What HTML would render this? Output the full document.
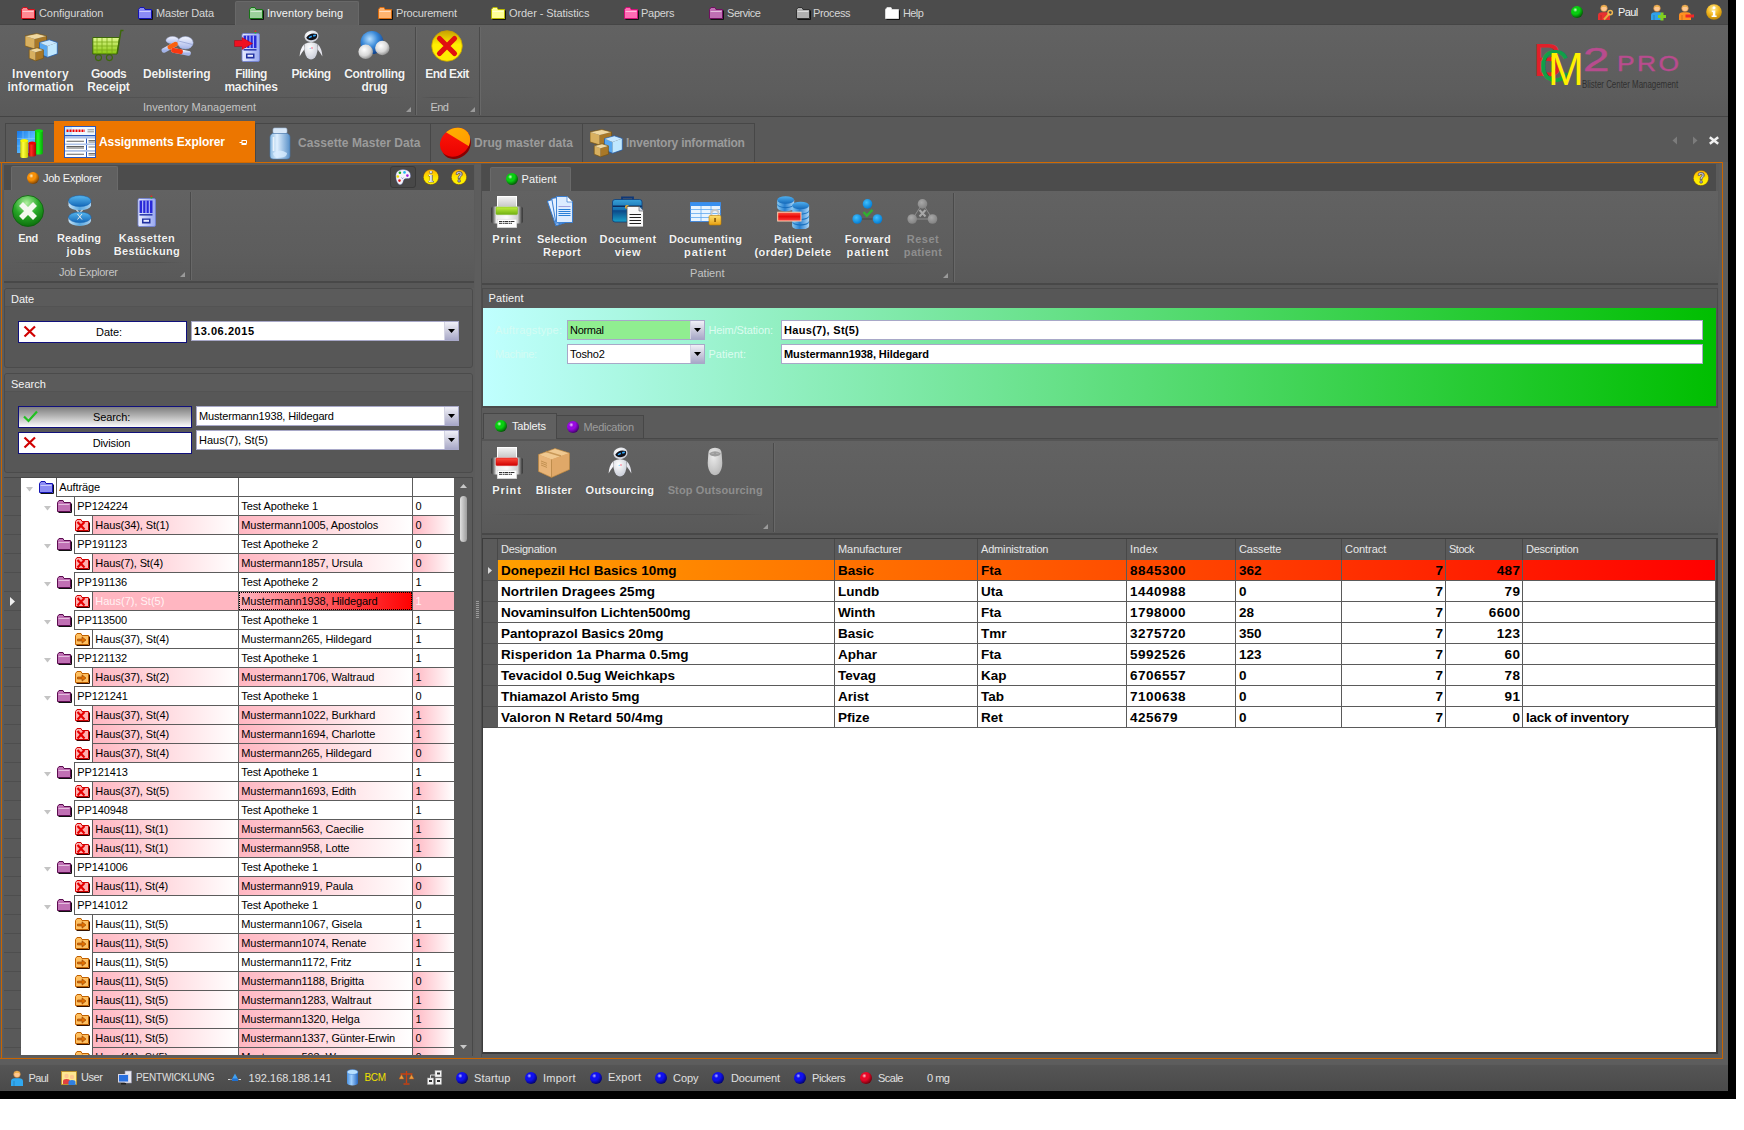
<!DOCTYPE html>
<html lang="en"><head><meta charset="utf-8"><title>BCM2 PRO - Assignments Explorer</title>
<style>
html,body{margin:0;padding:0;background:#fff;}
body{width:1744px;height:1130px;overflow:hidden;position:relative;font-family:"Liberation Sans",sans-serif;}
#app{position:absolute;left:0;top:0;width:1728px;height:1091px;background:#5d5d5d;overflow:hidden;}
#app div,#app span,#app svg{position:absolute;box-sizing:border-box;}
.t{white-space:nowrap;font-size:11px;line-height:14px;color:#ececec;}
.m{color:#d6d6d6;}
.ma{color:#f4f4f4;}
.rb{font-weight:bold;color:#f2f2f2;text-align:center;text-shadow:0 0 1px rgba(0,0,0,.35);}
.rbt{font-weight:bold;font-size:12px;color:#f2f2f2;text-align:center;text-shadow:0 0 1px rgba(0,0,0,.35);}
.rbd{font-weight:bold;color:#8e8e8e;text-align:center;}
.gl{color:#c4c4c4;}
.dt{font-weight:bold;font-size:12px;line-height:14px;color:#9b9b9b;}
.dta{font-weight:bold;font-size:12px;line-height:14px;color:#fff;}
.k{color:#000;letter-spacing:-0.1px;}
.kb{color:#000;font-weight:bold;}
.g{color:#000;font-weight:bold;font-size:13.5px;line-height:16px;}
.gh{color:#e8e8e8;}
.st{color:#e0e0e0;}
.sy{color:#f0e000;}
.ts{color:#fff2f4;}
.pl{color:#d4fcf4;}
.pl2{color:#dcfcf0;}
.gl2{color:#9c9c9c;}
</style></head>
<body>
<div style="position:absolute;left:1728px;top:0;width:8px;height:1099px;background:#000"></div>
<div style="position:absolute;left:0;top:1091px;width:1736px;height:8px;background:#000"></div>
<div id="app">
<!-- menu bar -->
<div style="left:0px;top:0px;width:1728px;height:25px;background:#4c4c4c;border-bottom:1px solid #454545"></div><div style="left:235px;top:1px;width:124px;height:25px;background:#5f5f5f;border:1px solid #686868;border-bottom:none;border-radius:2px 2px 0 0"></div><svg style="left:21px;top:7px" width="15" height="13" viewBox="0 0 15 13"><path d="M0.5 2.5 L2 0.5 H6 L7 2.5 H13.5 V11.5 H0.5 Z" fill="#ff8a94" stroke="#d0101c" stroke-width="1"/><path d="M1.5 4.5 H12.5" stroke="#fff" stroke-opacity=".55" stroke-width="1"/><path d="M1.5 12.5 H14.5 V3.5" stroke="#111" stroke-width="1" fill="none"/></svg><span class="t m" style="left:39px;top:6px;letter-spacing:-0.08px;">Configuration</span>
<svg style="left:138px;top:7px" width="15" height="13" viewBox="0 0 15 13"><path d="M0.5 2.5 L2 0.5 H6 L7 2.5 H13.5 V11.5 H0.5 Z" fill="#8c8cf4" stroke="#1414b4" stroke-width="1"/><path d="M1.5 4.5 H12.5" stroke="#fff" stroke-opacity=".55" stroke-width="1"/><path d="M1.5 12.5 H14.5 V3.5" stroke="#111" stroke-width="1" fill="none"/></svg><span class="t m" style="left:156px;top:6px;letter-spacing:-0.19px;">Master Data</span>
<svg style="left:249px;top:7px" width="15" height="13" viewBox="0 0 15 13"><path d="M0.5 2.5 L2 0.5 H6 L7 2.5 H13.5 V11.5 H0.5 Z" fill="#9cd09c" stroke="#187418" stroke-width="1"/><path d="M1.5 4.5 H12.5" stroke="#fff" stroke-opacity=".55" stroke-width="1"/><path d="M1.5 12.5 H14.5 V3.5" stroke="#111" stroke-width="1" fill="none"/></svg><span class="t ma" style="left:267px;top:6px;letter-spacing:0.06px;">Inventory being</span>
<svg style="left:378px;top:7px" width="15" height="13" viewBox="0 0 15 13"><path d="M0.5 2.5 L2 0.5 H6 L7 2.5 H13.5 V11.5 H0.5 Z" fill="#ffb470" stroke="#d86c10" stroke-width="1"/><path d="M1.5 4.5 H12.5" stroke="#fff" stroke-opacity=".55" stroke-width="1"/><path d="M1.5 12.5 H14.5 V3.5" stroke="#111" stroke-width="1" fill="none"/></svg><span class="t m" style="left:396px;top:6px;letter-spacing:-0.20px;">Procurement</span>
<svg style="left:491px;top:7px" width="15" height="13" viewBox="0 0 15 13"><path d="M0.5 2.5 L2 0.5 H6 L7 2.5 H13.5 V11.5 H0.5 Z" fill="#ffff98" stroke="#b8b800" stroke-width="1"/><path d="M1.5 4.5 H12.5" stroke="#fff" stroke-opacity=".55" stroke-width="1"/><path d="M1.5 12.5 H14.5 V3.5" stroke="#111" stroke-width="1" fill="none"/></svg><span class="t m" style="left:509px;top:6px;letter-spacing:-0.08px;">Order - Statistics</span>
<svg style="left:624px;top:7px" width="15" height="13" viewBox="0 0 15 13"><path d="M0.5 2.5 L2 0.5 H6 L7 2.5 H13.5 V11.5 H0.5 Z" fill="#ff6cb4" stroke="#d01078" stroke-width="1"/><path d="M1.5 4.5 H12.5" stroke="#fff" stroke-opacity=".55" stroke-width="1"/><path d="M1.5 12.5 H14.5 V3.5" stroke="#111" stroke-width="1" fill="none"/></svg><span class="t m" style="left:641px;top:6px;letter-spacing:-0.27px;">Papers</span>
<svg style="left:709px;top:7px" width="15" height="13" viewBox="0 0 15 13"><path d="M0.5 2.5 L2 0.5 H6 L7 2.5 H13.5 V11.5 H0.5 Z" fill="#c070b4" stroke="#701060" stroke-width="1"/><path d="M1.5 4.5 H12.5" stroke="#fff" stroke-opacity=".55" stroke-width="1"/><path d="M1.5 12.5 H14.5 V3.5" stroke="#111" stroke-width="1" fill="none"/></svg><span class="t m" style="left:727px;top:6px;letter-spacing:-0.45px;">Service</span>
<svg style="left:796px;top:7px" width="15" height="13" viewBox="0 0 15 13"><path d="M0.5 2.5 L2 0.5 H6 L7 2.5 H13.5 V11.5 H0.5 Z" fill="#b0b0b0" stroke="#303030" stroke-width="1"/><path d="M1.5 4.5 H12.5" stroke="#fff" stroke-opacity=".55" stroke-width="1"/><path d="M1.5 12.5 H14.5 V3.5" stroke="#111" stroke-width="1" fill="none"/></svg><span class="t m" style="left:813px;top:6px;letter-spacing:-0.37px;">Process</span>
<svg style="left:885px;top:7px" width="15" height="13" viewBox="0 0 15 13"><path d="M0.5 2.5 L2 0.5 H6 L7 2.5 H13.5 V11.5 H0.5 Z" fill="#ffffff" stroke="#d8d8d8" stroke-width="1"/><path d="M1.5 4.5 H12.5" stroke="#fff" stroke-opacity=".55" stroke-width="1"/><path d="M1.5 12.5 H14.5 V3.5" stroke="#111" stroke-width="1" fill="none"/></svg><span class="t m" style="left:903px;top:6px;letter-spacing:-0.60px;">Help</span>
<div style="left:1571px;top:6px;width:12px;height:12px;border-radius:50%;background:radial-gradient(circle 9.4px at 36% 32%,#c8ffc8 0%,#08d010 24%,#08d010 46%,#023c04 100%)"></div><svg style="left:1597px;top:4px" width="17" height="17" viewBox="0 0 17 17"><defs><linearGradient id="g1" x1="0" y1="0" x2="0" y2="1"><stop offset="0" stop-color="#e83030"/><stop offset="1" stop-color="#e83030"/></linearGradient></defs><circle cx="7" cy="4.3" r="3.3" fill="#ffc890" stroke="#c88030" stroke-width=".6"/><path d="M3.7 3.6 Q7 -0.8 10.3 3.6 Q7 2 3.7 3.6Z" fill="#e8b040"/><path d="M1 16 V11.5 Q1 8.2 5 8.2 H9 Q13 8.2 13 11.5 V16Z" fill="url(#g1)"/><path d="M4 11 V16" stroke="#000" stroke-opacity=".25" stroke-width=".8"/><path d="M7 15.5 L12.5 9.5" stroke="#e8a840" stroke-width="2"/><circle cx="13.2" cy="8.6" r="2.2" fill="none" stroke="#f0b850" stroke-width="1.5"/></svg><span class="t ma" style="left:1618px;top:5px;letter-spacing:-0.60px;">Paul</span><svg style="left:1650px;top:4px" width="17" height="17" viewBox="0 0 17 17"><defs><linearGradient id="g2" x1="0" y1="0" x2="0" y2="1"><stop offset="0" stop-color="#30a0e8"/><stop offset="1" stop-color="#30a0e8"/></linearGradient></defs><circle cx="7" cy="4.3" r="3.3" fill="#ffc890" stroke="#c88030" stroke-width=".6"/><path d="M3.7 3.6 Q7 -0.8 10.3 3.6 Q7 2 3.7 3.6Z" fill="#e8b040"/><path d="M1 16 V11.5 Q1 8.2 5 8.2 H9 Q13 8.2 13 11.5 V16Z" fill="url(#g2)"/><path d="M4 11 V16" stroke="#000" stroke-opacity=".25" stroke-width=".8"/><path d="M8 12.5 H16 M12 8.5 V16.5" stroke="#80d020" stroke-width="3"/></svg><svg style="left:1678px;top:4px" width="17" height="17" viewBox="0 0 17 17"><defs><linearGradient id="g3" x1="0" y1="0" x2="0" y2="1"><stop offset="0" stop-color="#ff9020"/><stop offset="1" stop-color="#ff9020"/></linearGradient></defs><circle cx="7" cy="4.3" r="3.3" fill="#ffc890" stroke="#c88030" stroke-width=".6"/><path d="M3.7 3.6 Q7 -0.8 10.3 3.6 Q7 2 3.7 3.6Z" fill="#e8b040"/><path d="M1 16 V11.5 Q1 8.2 5 8.2 H9 Q13 8.2 13 11.5 V16Z" fill="url(#g3)"/><path d="M4 11 V16" stroke="#000" stroke-opacity=".25" stroke-width=".8"/><rect x="7.5" y="10.5" width="8.5" height="3" fill="#f02828"/></svg><svg style="left:1706px;top:4px" width="16" height="16" viewBox="0 0 16 16"><defs><radialGradient id="g4" cx="0.45" cy="0.3" r="0.75"><stop offset="0" stop-color="#fff0a0"/><stop offset="0.5" stop-color="#f4b820"/><stop offset="1" stop-color="#b88000"/></radialGradient></defs><circle cx="8" cy="8" r="7.8" fill="url(#g4)"/><circle cx="8" cy="3.8" r="1.5" fill="#fff"/><path d="M5.8 6.5 H9.3 V11.5 H10.6 V13 H5.6 V11.5 H6.9 V8 H5.8Z" fill="#fff"/></svg>
<!-- ribbon -->
<div style="left:0px;top:25px;width:1728px;height:91px;background:linear-gradient(#626262,#5d5d5d 70%,#595959)"></div><div style="left:0px;top:116px;width:1728px;height:1px;background:#444"></div><div style="left:0px;top:117px;width:1728px;height:46px;background:#595959"></div><div style="left:415px;top:27px;width:1px;height:88px;background:#4a4a4a"></div><div style="left:416px;top:27px;width:1px;height:88px;background:#686868"></div><div style="left:479px;top:27px;width:1px;height:88px;background:#4a4a4a"></div><div style="left:480px;top:27px;width:1px;height:88px;background:#686868"></div><div style="left:8px;top:97px;width:400px;height:1px;background:linear-gradient(90deg,rgba(80,80,80,0),#525252 15%,#525252 85%,rgba(80,80,80,0))"></div><div style="left:420px;top:97px;width:56px;height:1px;background:linear-gradient(90deg,rgba(80,80,80,0),#525252 20%,#525252 80%,rgba(80,80,80,0))"></div><svg style="left:406px;top:107px" width="5" height="5" viewBox="0 0 5 5"><path d="M5 0 V5 H0 Z" fill="#9a9a9a"/></svg><svg style="left:470px;top:107px" width="5" height="5" viewBox="0 0 5 5"><path d="M5 0 V5 H0 Z" fill="#9a9a9a"/></svg><span class="t gl" style="left:143px;top:100px;letter-spacing:0.03px;">Inventory Management</span><span class="t gl" style="left:430.5px;top:100px;letter-spacing:-0.60px;">End</span>
<svg style="left:25px;top:31px" width="33" height="31" viewBox="0 0 33 31"><path d="M0 4.8870000000000005 L9.675 7.925000000000001 V18.0 L0 14.962 Z" fill="#d8b060"/><path d="M9.675 7.925000000000001 L21.5 4.8870000000000005 V14.962 L9.675 18.0 Z" fill="#a87828"/><path d="M0 4.8870000000000005 L11.825000000000001 2.5 L21.5 4.8870000000000005 L9.675 7.925000000000001 Z" fill="#f0d8a0"/><path d="M0 4.8870000000000005 L11.825000000000001 2.5 L21.5 4.8870000000000005 V14.962 L9.675 18.0 L0 14.962 Z" fill="none" stroke="#7a5410" stroke-width=".7"/><path d="M14.5 11.495000000000001 L22.509999999999998 14.925 V26.3 L14.5 22.87 Z" fill="#58a8f0"/><path d="M22.509999999999998 14.925 L32.3 11.495000000000001 V22.87 L22.509999999999998 26.3 Z" fill="#c0e8ff"/><path d="M14.5 11.495000000000001 L24.29 8.8 L32.3 11.495000000000001 L22.509999999999998 14.925 Z" fill="#c8e8ff"/><path d="M14.5 11.495000000000001 L24.29 8.8 L32.3 11.495000000000001 V22.87 L22.509999999999998 26.3 L14.5 22.87 Z" fill="none" stroke="#1c5cb0" stroke-width=".7"/><path d="M4.2 18.802 L10.59 21.35 V29.8 L4.2 27.252000000000002 Z" fill="#d8b060"/><path d="M10.59 21.35 L18.4 18.802 V27.252000000000002 L10.59 29.8 Z" fill="#a87828"/><path d="M4.2 18.802 L12.010000000000002 16.8 L18.4 18.802 L10.59 21.35 Z" fill="#f0d8a0"/><path d="M4.2 18.802 L12.010000000000002 16.8 L18.4 18.802 V27.252000000000002 L10.59 29.8 L4.2 27.252000000000002 Z" fill="none" stroke="#7a5410" stroke-width=".7"/></svg><span class="t rbt" style="left:-19.5px;top:66.5px;width:120px;text-align:center;letter-spacing:0.31px;">Inventory</span><span class="t rbt" style="left:-19.5px;top:79.5px;width:120px;text-align:center;letter-spacing:0.00px;">information</span>
<svg style="left:92px;top:29px" width="33" height="33" viewBox="0 0 33 33"><defs><linearGradient id="g5" x1="0" y1="0" x2="0" y2="1"><stop offset="0" stop-color="#e0f890"/><stop offset="1" stop-color="#88c810"/></linearGradient></defs><path d="M0.8 8.5 H27.5 L25 25 H0.8 Z" fill="url(#g5)" stroke="#3c6808" stroke-width="1"/><path d="M5 9 V24.5 M10 9 V24.5 M15 9 V24.5 M20 9 V24.5 M1 13 H26.5 M1 17 H26 M1 21 H25.5" stroke="#78a818" stroke-width=".8" fill="none"/><path d="M25.2 24.5 L29 1.5 H31.5" stroke="#3c6808" stroke-width="1.4" fill="none"/><circle cx="6.5" cy="28.6" r="3" fill="none" stroke="#3c6808" stroke-width="1.1"/><circle cx="17.4" cy="28.6" r="3" fill="none" stroke="#3c6808" stroke-width="1.1"/></svg><span class="t rbt" style="left:48.5px;top:66.5px;width:120px;text-align:center;letter-spacing:-0.60px;">Goods</span><span class="t rbt" style="left:48.5px;top:79.5px;width:120px;text-align:center;letter-spacing:-0.14px;">Receipt</span>
<svg style="left:160px;top:32px" width="34" height="26" viewBox="0 0 34 26"><defs><linearGradient id="g6" x1="0" y1="0" x2="0" y2="1"><stop offset="0" stop-color="#f4f6ff"/><stop offset="1" stop-color="#a4b4e8"/></linearGradient></defs><ellipse cx="12.500" cy="8.200" rx="6.500" ry="3.600" fill="url(#g6)" stroke="#a8b4e0" stroke-width=".4"/><ellipse cx="25.400" cy="10.800" rx="7.800" ry="6.300" fill="url(#g6)" stroke="#98a8d8" stroke-width=".5"/><path d="M18.500 9 L32.500 12.500" stroke="#8c9cd0" stroke-width=".7"/><path d="M4 18.300 L15.500 12.200" stroke="url(#g6)" stroke-width="4.800" stroke-linecap="round"/><path d="M10 15.100 L15.500 12.200" stroke="#f86010" stroke-width="4.800" stroke-linecap="round"/><path d="M13.500 18.300 L28.500 21.300" stroke="url(#g6)" stroke-width="4.800" stroke-linecap="round"/><path d="M13.500 18.300 L20.500 19.700" stroke="#f83810" stroke-width="4.800" stroke-linecap="round"/></svg><span class="t rbt" style="left:116.69999999999999px;top:66.5px;width:120px;text-align:center;letter-spacing:-0.17px;">Deblistering</span>
<svg style="left:234px;top:30px" width="33" height="33" viewBox="0 0 33 33"><defs><linearGradient id="g7" x1="0" y1="0" x2="1" y2="0"><stop offset="0" stop-color="#e8ecff"/><stop offset="1" stop-color="#98a8f0"/></linearGradient></defs><rect x="8" y="3.5" width="17.5" height="28" rx="1.5" fill="url(#g7)" stroke="#7080d8" stroke-width=".8"/><rect x="9.5" y="5.5" width="13" height="12.5" fill="#2828d8"/><path d="M12.7 5.5 V18 M16 5.5 V18 M19.3 5.5 V18" stroke="#c8d0ff" stroke-width="1"/><rect x="9.5" y="19" width="13" height="1.6" fill="#3040b0"/><rect x="12" y="23.5" width="8.5" height="5" fill="#2030a0"/><rect x="13.5" y="24.8" width="5.5" height="2" fill="#e8ecff"/><rect x="20.6" y="0.5" width="1.6" height="1.6" fill="#f02020"/><rect x="20.6" y="2.1" width="1.6" height="1.4" fill="#20c020"/><path d="M0.5 10.5 H8 V7.5 L18.5 13.5 L8 19.5 V16.5 H0.5 Z" fill="#f01020" stroke="#a80010" stroke-width=".5"/></svg><span class="t rbt" style="left:191px;top:66.5px;width:120px;text-align:center;letter-spacing:-0.55px;">Filling</span><span class="t rbt" style="left:191px;top:79.5px;width:120px;text-align:center;letter-spacing:-0.27px;">machines</span>
<svg style="left:295px;top:30px" width="32" height="32" viewBox="0 0 32 32"><defs><radialGradient id="g8" cx="0.4" cy="0.3" r="0.8"><stop offset="0" stop-color="#ffffff"/><stop offset="1" stop-color="#c4c8d4"/></radialGradient></defs><ellipse cx="16.500" cy="6.300" rx="7" ry="5.800" transform="rotate(-12 16.500 6.300)" fill="url(#g8)"/><path d="M11.300 7.500 Q15.500 1.800 22 4.300 Q23.200 8.800 17.800 10 Q12.800 10.800 11.300 7.500Z" fill="#101018"/><path d="M13.600 7.200 l2.800 -1.800 l0.700 1.500 l-2.800 1.300z M18 5 l2.600 -.6 l.4 1.500 l-2.600 .9z" fill="#30a8ff"/><path d="M9.500 14 Q16 10.500 22.500 14 Q23.500 22 20 27.500 Q16 31.500 12 27.500 Q8.500 22 9.500 14Z" fill="url(#g8)"/><path d="M8.800 14.500 Q5 19 4.600 26.500 Q7.200 22 9.300 19.500Z" fill="#f4f4f8"/><path d="M23.200 14.500 Q27 19 27.400 26.500 Q24.800 22 22.700 19.500Z" fill="#e4e4ec"/><circle cx="17" cy="18" r=".8" fill="#ff6080"/><circle cx="15.200" cy="18.300" r=".6" fill="#60c8ff"/></svg><span class="t rbt" style="left:251px;top:66.5px;width:120px;text-align:center;letter-spacing:-0.50px;">Picking</span>
<svg style="left:358px;top:31px" width="33" height="29" viewBox="0 0 33 29"><defs><radialGradient id="g9" cx="0.4" cy="0.35" r="0.7"><stop offset="0" stop-color="#b8e0ff"/><stop offset="0.5" stop-color="#3888d8"/><stop offset="1" stop-color="#0c3c88"/></radialGradient><radialGradient id="g10" cx="0.4" cy="0.35" r="0.7"><stop offset="0" stop-color="#ffffff"/><stop offset="0.6" stop-color="#d8d8d8"/><stop offset="1" stop-color="#888888"/></radialGradient></defs><circle cx="14" cy="11.5" r="11.5" fill="url(#g9)"/><circle cx="7.7" cy="20.8" r="7.3" fill="url(#g10)"/><circle cx="24.3" cy="17" r="7.2" fill="url(#g10)"/></svg><span class="t rbt" style="left:314.5px;top:66.5px;width:120px;text-align:center;letter-spacing:-0.30px;">Controlling</span><span class="t rbt" style="left:314.5px;top:79.5px;width:120px;text-align:center;letter-spacing:-0.22px;">drug</span>
<svg style="left:431px;top:30px" width="32" height="32" viewBox="0 0 32 32"><defs><linearGradient id="g11" x1="0" y1="0" x2="0" y2="1"><stop offset="0" stop-color="#c8a000"/><stop offset="0.45" stop-color="#ffee00"/><stop offset="1" stop-color="#ffee00"/></linearGradient></defs><circle cx="16" cy="16" r="15.3" fill="url(#g11)" stroke="#c8a000" stroke-width=".8"/><path d="M8.5 8.5 L23.5 23.5 M23.5 8.5 L8.5 23.5" stroke="#e01010" stroke-width="5.2" stroke-linecap="round"/></svg><span class="t rbt" style="left:387px;top:66.5px;width:120px;text-align:center;letter-spacing:-0.57px;">End Exit</span>
<!-- document tabs -->
<div style="left:5px;top:123px;width:50px;height:40px;border:1px solid #474747;border-bottom:none;background:#5a5a5a"></div><div style="left:255px;top:123px;width:176px;height:40px;border:1px solid #474747;border-bottom:none;background:#5a5a5a"></div><div style="left:431px;top:123px;width:152px;height:40px;border:1px solid #474747;border-bottom:none;background:#5a5a5a;border-left:none"></div><div style="left:583px;top:123px;width:172px;height:40px;border:1px solid #474747;border-bottom:none;background:#5a5a5a;border-left:none"></div><div style="left:54px;top:121px;width:201px;height:42px;background:#ec7600"></div><div style="left:0px;top:162px;width:1725px;height:1px;background:#d26a00"></div><svg style="left:15px;top:128px" width="30" height="32" viewBox="0 0 30 32"><defs><linearGradient id="g12" x1="0" y1="0" x2="1" y2="1"><stop offset="0" stop-color="#1878e8"/><stop offset="0.6" stop-color="#58b8ff"/><stop offset="1" stop-color="#2890f0"/></linearGradient></defs><rect x="2" y="3" width="18" height="22" fill="url(#g12)"/><path d="M2 10.5 H20 M2 18 H20 M8 3 V25 M14 3 V25" stroke="#a0d8ff" stroke-width=".6" stroke-opacity=".7"/><defs><linearGradient id="g13" x1="0" y1="0" x2="1" y2="0"><stop offset="0" stop-color="#08a808"/><stop offset="0.35" stop-color="#20ff20"/><stop offset="1" stop-color="#08a808"/></linearGradient></defs><path d="M20.1 2.8 V25 A3.9 1.6 0 0 0 27.9 25 V2.8 Z" fill="url(#g13)"/><ellipse cx="24" cy="2.8" rx="3.9" ry="1.6" fill="#10e010"/><defs><linearGradient id="g14" x1="0" y1="0" x2="1" y2="0"><stop offset="0" stop-color="#c8c800"/><stop offset="0.35" stop-color="#ffff40"/><stop offset="1" stop-color="#c8c800"/></linearGradient></defs><path d="M5.299999999999999 12.5 V28.5 A3.9 1.6 0 0 0 13.1 28.5 V12.5 Z" fill="url(#g14)"/><ellipse cx="9.2" cy="12.5" rx="3.9" ry="1.6" fill="#f8f800"/><defs><linearGradient id="g15" x1="0" y1="0" x2="1" y2="0"><stop offset="0" stop-color="#b00000"/><stop offset="0.35" stop-color="#ff3020"/><stop offset="1" stop-color="#b00000"/></linearGradient></defs><path d="M13.5 15 V27 A3.7 1.6 0 0 0 20.9 27 V15 Z" fill="url(#g15)"/><ellipse cx="17.2" cy="15" rx="3.7" ry="1.6" fill="#f00000"/></svg><svg style="left:64px;top:126px" width="32" height="32" viewBox="0 0 32 32"><rect x="0.5" y="0.5" width="31" height="31" fill="#fff" stroke="#2858c0" stroke-width="1"/><rect x="1" y="1" width="30" height="8" fill="#c8e8ff"/><rect x="8" y="1" width="23" height="8" fill="#fff" fill-opacity=".7"/><path d="M2.5 4.8 H21" stroke="#f00000" stroke-width="2.6" stroke-dasharray="2 1"/><path d="M23.5 3.8 H30 M23.5 5.8 H30" stroke="#909090" stroke-width="1"/><path d="M0.5 9.5 H31.5 M22.5 9.5 V31.5" stroke="#2858c0" stroke-width="1"/><rect x="1" y="10" width="30" height="2.6" fill="#b0c4e8"/><rect x="1" y="17.5" width="30" height="1.6" fill="#b0c4e8"/><rect x="1" y="24" width="30" height="1.8" fill="#b0c4e8"/><path d="M2.5 15.2 H20 M2.5 20.5 H20 M2.5 22 H20 M2.5 28.3 H20" stroke="#606060" stroke-width="1.1"/><path d="M24.5 14.5 H31 M24.5 16 H31 M24.5 21 H31 M24.5 27.5 H31 M24.5 29 H31" stroke="#707070" stroke-width="1.1"/></svg><span class="t dta" style="left:99px;top:135px;letter-spacing:-0.07px;">Assignments Explorer</span><svg style="left:239px;top:139px" width="8" height="7" viewBox="0 0 8 7"><path d="M0.5 3.5 H3 M3 1 V6 M3 1.5 H7.5 V4.5 H3 M3 5.5 H7.5" stroke="#fff" stroke-width="1" fill="none"/></svg><svg style="left:266.5px;top:127px" width="26" height="33" viewBox="0 0 26 33"><defs><linearGradient id="g16" x1="0" y1="0" x2="1" y2="0"><stop offset="0" stop-color="#88b8e0"/><stop offset="0.35" stop-color="#e0f0ff"/><stop offset="1" stop-color="#5890c8"/></linearGradient></defs><rect x="6" y="1" width="14" height="5.5" rx="1.5" fill="#d8e8f8" stroke="#a0b8d8" stroke-width=".6"/><path d="M5.5 6.5 H20.5 Q23 7.5 23 10 V29 Q23 32 20 32 H6 Q3 32 3 29 V10 Q3 7.5 5.5 6.5Z" fill="url(#g16)" stroke="#4878b0" stroke-width=".6"/><path d="M6 26 Q13 21 20 26 Q20 30.5 13 30.5 Q6 30.5 6 26Z" fill="#d8ecff" fill-opacity=".8"/><path d="M6.5 10 V24" stroke="#fff" stroke-width="1.6" stroke-opacity=".7"/></svg><span class="t dt" style="left:298px;top:136px;letter-spacing:0.06px;">Cassette Master Data</span><svg style="left:438.5px;top:126.5px" width="33" height="33" viewBox="0 0 33 33"><defs><linearGradient id="g17" x1="0" y1="0" x2="0" y2="1"><stop offset="0" stop-color="#ff1808"/><stop offset="1" stop-color="#e80000"/></linearGradient><linearGradient id="g18" x1="0" y1="0" x2="1" y2="1"><stop offset="0" stop-color="#ffb400"/><stop offset="1" stop-color="#ff9800"/></linearGradient><clipPath id="g19"><ellipse cx="16" cy="15.2" rx="16" ry="13.4" transform="rotate(-38 16 15.2)"/></clipPath></defs><ellipse cx="17" cy="17.6" rx="15.5" ry="13.6" transform="rotate(-38 17 17.6)" fill="#8a0000"/><g clip-path="url(#g19)"><rect x="0" y="0" width="33" height="33" fill="url(#g17)"/><path d="M5 4 L33 21 V-2 H5Z" fill="url(#g18)"/></g></svg><span class="t dt" style="left:474px;top:136px;letter-spacing:0.02px;">Drug master data</span><svg style="left:590px;top:127px" width="33" height="31" viewBox="0 0 33 31"><path d="M0 4.8870000000000005 L9.675 7.925000000000001 V18.0 L0 14.962 Z" fill="#d8b060"/><path d="M9.675 7.925000000000001 L21.5 4.8870000000000005 V14.962 L9.675 18.0 Z" fill="#a87828"/><path d="M0 4.8870000000000005 L11.825000000000001 2.5 L21.5 4.8870000000000005 L9.675 7.925000000000001 Z" fill="#f0d8a0"/><path d="M0 4.8870000000000005 L11.825000000000001 2.5 L21.5 4.8870000000000005 V14.962 L9.675 18.0 L0 14.962 Z" fill="none" stroke="#7a5410" stroke-width=".7"/><path d="M14.5 11.495000000000001 L22.509999999999998 14.925 V26.3 L14.5 22.87 Z" fill="#58a8f0"/><path d="M22.509999999999998 14.925 L32.3 11.495000000000001 V22.87 L22.509999999999998 26.3 Z" fill="#c0e8ff"/><path d="M14.5 11.495000000000001 L24.29 8.8 L32.3 11.495000000000001 L22.509999999999998 14.925 Z" fill="#c8e8ff"/><path d="M14.5 11.495000000000001 L24.29 8.8 L32.3 11.495000000000001 V22.87 L22.509999999999998 26.3 L14.5 22.87 Z" fill="none" stroke="#1c5cb0" stroke-width=".7"/><path d="M4.2 18.802 L10.59 21.35 V29.8 L4.2 27.252000000000002 Z" fill="#d8b060"/><path d="M10.59 21.35 L18.4 18.802 V27.252000000000002 L10.59 29.8 Z" fill="#a87828"/><path d="M4.2 18.802 L12.010000000000002 16.8 L18.4 18.802 L10.59 21.35 Z" fill="#f0d8a0"/><path d="M4.2 18.802 L12.010000000000002 16.8 L18.4 18.802 V27.252000000000002 L10.59 29.8 L4.2 27.252000000000002 Z" fill="none" stroke="#7a5410" stroke-width=".7"/></svg><span class="t dt" style="left:626px;top:136px;letter-spacing:-0.22px;">Inventory information</span><svg style="left:1671.7px;top:136px" width="6" height="9" viewBox="0 0 6 9"><path d="M5 0.5 V8.5 L0.5 4.5 Z" fill="#7c7c7c"/></svg><svg style="left:1692.3px;top:136px" width="6" height="9" viewBox="0 0 6 9"><path d="M1 0.5 V8.5 L5.5 4.5 Z" fill="#7c7c7c"/></svg><svg style="left:1708.5px;top:136px" width="10" height="9" viewBox="0 0 10 9"><path d="M0.8 1.200 L9.200 7.800 M9.200 1.200 L0.800 7.800" stroke="#f0f0f0" stroke-width="2.5"/></svg>
<div style="left:1px;top:162px;width:1px;height:897px;background:#c86400"></div><div style="left:1722px;top:162px;width:1px;height:897px;background:#c86400"></div><div style="left:0px;top:1058px;width:1723px;height:1px;background:#c86400"></div><div style="left:1723px;top:162px;width:5px;height:902px;background:#5d5d5d"></div><!-- logo -->
<span class="t" style="left:1532.8px;top:37px;font-size:46px;line-height:46px;color:#e0202a;transform:scaleX(0.955);transform-origin:0 0;">B</span><span class="t" style="left:1539.2px;top:42.6px;font-size:46px;line-height:46px;color:#10a048;transform:scaleX(0.91);transform-origin:0 0;">C</span><span class="t" style="left:1547.8px;top:46.2px;font-size:46px;line-height:46px;color:#fff000;transform:scaleX(0.935);transform-origin:0 0;">M</span><span class="t" style="left:1583.2px;top:44.4px;font-size:32.5px;line-height:32.5px;color:#b84c8e;transform:scaleX(1.46);transform-origin:0 0;-webkit-text-stroke:.5px #b84c8e;">2</span><span class="t" style="left:1617px;top:52.7px;font-size:22px;line-height:22px;color:#b84c8e;transform:scaleX(1.2);transform-origin:0 0;letter-spacing:2px;-webkit-text-stroke:.4px #b84c8e;">PRO</span><span class="t" style="left:1581.5px;top:80.3px;font-size:10px;line-height:10px;color:#303030;transform:scaleX(0.79);transform-origin:0 0;">Blister Center Management</span>
<!-- left panel: Job Explorer -->
<div style="left:3px;top:163px;width:472px;height:894px;background:#5b5b5b"></div><div style="left:4px;top:165px;width:470px;height:25px;background:#4c4c4c"></div><div style="left:11px;top:166px;width:107px;height:25px;background:#606060;border:1px solid #6a6a6a;border-bottom:none;border-radius:2px 2px 0 0"></div><div style="left:27px;top:172px;width:12px;height:12px;border-radius:50%;background:radial-gradient(circle 9.4px at 36% 32%,#fff0c8 0%,#f89008 24%,#f89008 46%,#603000 100%)"></div><span class="t ma" style="left:43px;top:171px;letter-spacing:-0.25px;">Job Explorer</span><div style="left:390px;top:166px;width:26px;height:22px;background:#484848;border:1px solid #3a3a3a;border-radius:3px"></div><svg style="left:395.2px;top:169px" width="17" height="17" viewBox="0 0 17 17"><path d="M0.8 6.500 Q0.800 1 8 0.600 Q15.600 1 15.600 7 Q15.600 9.800 12 9.600 Q8.800 9.400 8.300 12 Q7.500 16.200 4 15.600 Q0.800 13 0.800 6.500Z" fill="#f4f4fa" stroke="#5060a8" stroke-width=".6" stroke-dasharray="1 .5"/><circle cx="4.900" cy="3.700" r="1.300" fill="#20b020"/><circle cx="9.500" cy="3.400" r="1.300" fill="#20b8f0"/><circle cx="12.400" cy="6.600" r="1.300" fill="#a020e0"/><circle cx="2.800" cy="7.500" r="1.300" fill="#f0e000"/><circle cx="4.500" cy="11.600" r="1.300" fill="#e02020"/><path d="M6.5 8.500 l1 1.200 l1.200 -1.200" stroke="#6070b0" stroke-width=".6" fill="none"/></svg><svg style="left:423.3px;top:169.2px" width="16" height="16" viewBox="0 0 16 16"><defs><linearGradient id="g20" x1="0" y1="0" x2="0" y2="1"><stop offset="0" stop-color="#ffb000"/><stop offset="0.55" stop-color="#ffe800"/><stop offset="1" stop-color="#fff400"/></linearGradient><linearGradient id="g21" x1="0" y1="0" x2="1" y2="0"><stop offset="0" stop-color="#ffffff"/><stop offset="1" stop-color="#a8a8b0"/></linearGradient></defs><circle cx="8" cy="8" r="7.6" fill="url(#g20)" stroke="#805000" stroke-width=".7" stroke-dasharray="1.2 .6"/><path d="M6.7 2.3 H9.3 V4.600 H6.700Z M5.600 6 H9.500 V12 H10.800 V13.300 H5.400 V12 H6.800 V7.300 H5.600Z" fill="#202060"/><path d="M6.9 2 H9 V4.200 H6.900Z M5.800 5.700 H9.200 V11.800 H10.500 V12.900 H5.600 V11.800 H7 V6.900 H5.800Z" fill="url(#g21)"/></svg><svg style="left:451.3px;top:169.2px" width="16" height="16" viewBox="0 0 16 16"><defs><linearGradient id="g22" x1="0" y1="0" x2="0" y2="1"><stop offset="0" stop-color="#ffb000"/><stop offset="0.55" stop-color="#ffe800"/><stop offset="1" stop-color="#fff400"/></linearGradient><linearGradient id="g23" x1="0" y1="0" x2="1" y2="0"><stop offset="0" stop-color="#ffffff"/><stop offset="1" stop-color="#a8a8b0"/></linearGradient></defs><circle cx="8" cy="8" r="7.6" fill="url(#g22)" stroke="#805000" stroke-width=".7" stroke-dasharray="1.2 .6"/><path d="M5 5.300 Q5 2.400 8.200 2.400 Q11.300 2.400 11.300 5 Q11.300 6.600 9.800 7.600 Q9.100 8.100 9.100 9.600 H7.100 Q7 7.600 8.200 6.700 Q9.100 6 9.100 5.100 Q9.100 4.100 8.100 4.100 Q7 4.100 6.900 5.300Z M7 10.800 H9.200 V13 H7Z" fill="url(#g23)" stroke="#202060" stroke-width=".6"/></svg>
<div style="left:4px;top:190px;width:470px;height:91px;background:linear-gradient(#626262,#5d5d5d 70%,#595959)"></div><div style="left:4px;top:281px;width:470px;height:2px;background:#484848"></div><div style="left:4px;top:283px;width:470px;height:5px;background:#585858"></div><div style="left:190px;top:192px;width:1px;height:88px;background:#4a4a4a"></div><div style="left:191px;top:192px;width:1px;height:88px;background:#686868"></div><div style="left:12px;top:262px;width:172px;height:1px;background:linear-gradient(90deg,rgba(80,80,80,0),#525252 15%,#525252 85%,rgba(80,80,80,0))"></div><svg style="left:180px;top:272px" width="5" height="5" viewBox="0 0 5 5"><path d="M5 0 V5 H0 Z" fill="#9a9a9a"/></svg><span class="t gl" style="left:59px;top:265px;letter-spacing:-0.25px;">Job Explorer</span><svg style="left:12px;top:195px" width="32" height="32" viewBox="0 0 32 32"><defs><radialGradient id="g24" cx="0.45" cy="0.25" r="0.8"><stop offset="0" stop-color="#b0f0a0"/><stop offset="0.5" stop-color="#28a828"/><stop offset="1" stop-color="#086808"/></radialGradient></defs><circle cx="16" cy="16" r="15.5" fill="url(#g24)" stroke="#0c600c" stroke-width=".8"/><path d="M9 9 L23 23 M23 9 L9 23" stroke="#f4f8f0" stroke-width="5.6"/></svg><span class="t rb" style="left:-32px;top:231px;width:120px;text-align:center;letter-spacing:-0.39px;">End</span>
<svg style="left:68px;top:195px" width="24" height="32" viewBox="0 0 24 32"><defs><linearGradient id="g25" x1="0" y1="0" x2="0" y2="1"><stop offset="0" stop-color="#58b8f0"/><stop offset="1" stop-color="#1468b8"/></linearGradient><linearGradient id="g26" x1="0" y1="0" x2="1" y2="0"><stop offset="0" stop-color="#c8e4f8"/><stop offset="0.5" stop-color="#58a8e0"/><stop offset="1" stop-color="#a8d0f0"/></linearGradient></defs><path d="M0.5 6 V10.5 A11.3 5.5 0 0 0 23 10.5 V6Z" fill="url(#g26)"/><ellipse cx="11.8" cy="6" rx="11.3" ry="5.5" fill="url(#g25)" stroke="#1060b0" stroke-width=".5"/><path d="M8.5 15 L14.5 21 M14.5 15 L8.5 21" stroke="#d8d8d8" stroke-width="1.2"/><path d="M0.5 22.5 V26 A11.3 5.5 0 0 0 23 26 V22.5Z" fill="url(#g26)"/><ellipse cx="11.8" cy="22.3" rx="11.3" ry="5.3" fill="url(#g25)" stroke="#1060b0" stroke-width=".5"/><path d="M9.5 19 L14 24.5 M14 19 L9.5 24.5" stroke="#e8e8e8" stroke-width="1"/></svg><span class="t rb" style="left:19px;top:231px;width:120px;text-align:center;letter-spacing:0.10px;">Reading</span><span class="t rb" style="left:19px;top:244px;width:120px;text-align:center;letter-spacing:0.63px;">jobs</span>
<svg style="left:131px;top:195px" width="33" height="33" viewBox="0 0 33 33"><defs><linearGradient id="g27" x1="0" y1="0" x2="1" y2="0"><stop offset="0" stop-color="#e8ecff"/><stop offset="1" stop-color="#98a8f0"/></linearGradient></defs><rect x="7" y="3.5" width="17.5" height="28" rx="1.5" fill="url(#g27)" stroke="#7080d8" stroke-width=".8"/><rect x="8.5" y="5.5" width="13" height="12.5" fill="#2828d8"/><path d="M11.7 5.5 V18 M15 5.5 V18 M18.3 5.5 V18" stroke="#c8d0ff" stroke-width="1"/><rect x="8.5" y="19" width="13" height="1.6" fill="#3040b0"/><rect x="11" y="23.5" width="8.5" height="5" fill="#2030a0"/><rect x="12.5" y="24.8" width="5.5" height="2" fill="#e8ecff"/><rect x="19.6" y="0.5" width="1.6" height="1.6" fill="#f02020"/><rect x="19.6" y="2.1" width="1.6" height="1.4" fill="#20c020"/></svg><span class="t rb" style="left:87px;top:231px;width:120px;text-align:center;letter-spacing:0.43px;">Kassetten</span><span class="t rb" style="left:87px;top:244px;width:120px;text-align:center;letter-spacing:0.34px;">Best&uuml;ckung</span>
<div style="left:4px;top:288px;width:469px;height:80px;background:#575757;border:1px solid #4b4b4b;border-radius:3px"></div><div style="left:5px;top:289px;width:467px;height:18px;background:#5b5b5b;border-bottom:1px solid #535353;border-radius:2px 2px 0 0"></div><span class="t ma" style="left:11px;top:292px;">Date</span>
<div style="left:4px;top:373px;width:469px;height:100px;background:#575757;border:1px solid #4b4b4b;border-radius:3px"></div><div style="left:5px;top:374px;width:467px;height:18px;background:#5b5b5b;border-bottom:1px solid #535353;border-radius:2px 2px 0 0"></div><span class="t ma" style="left:11px;top:377px;">Search</span>
<div style="left:18px;top:321px;width:169px;height:22px;background:#fff;border:1px solid #10107c"></div><svg style="left:23px;top:325px" width="14" height="13" viewBox="0 0 14 13"><path d="M1.5 1.5 L12 11.5 M12 1.5 L1.5 11.500" stroke="#d00000" stroke-width="2.2"/></svg><span class="t k" style="left:34px;top:325px;width:150px;text-align:center;">Date:</span>
<div style="left:191px;top:321px;width:268px;height:20px;background:#fff;border:1px solid #a8a8c8"></div><div style="left:444px;top:322px;width:14px;height:18px;background:linear-gradient(#f0f0f8,#d0d0e0 45%,#a8a8c8);border-left:1px solid #d4d4e4"></div><svg style="left:448px;top:329px" width="7" height="4" viewBox="0 0 7 4"><path d="M0 0 H7 L3.5 4Z" fill="#000"/></svg><span class="t kb" style="left:194px;top:324px;letter-spacing:0.55px;">13.06.2015</span>
<div style="left:18px;top:406px;width:174px;height:22px;background:linear-gradient(#7e7e7e,#b4b4b4 45%,#fdfdfd);border:1px solid #10107c"></div><svg style="left:23px;top:410px" width="15" height="13" viewBox="0 0 15 13"><path d="M1 6.5 L5.5 11 L14 1.5" fill="none" stroke="#20c020" stroke-width="2.2"/></svg><span class="t k" style="left:34px;top:410px;width:155px;text-align:center;">Search:</span>
<div style="left:196px;top:406px;width:263px;height:20px;background:#fff;border:1px solid #a8a8c8"></div><div style="left:444px;top:407px;width:14px;height:18px;background:linear-gradient(#f0f0f8,#d0d0e0 45%,#a8a8c8);border-left:1px solid #d4d4e4"></div><svg style="left:448px;top:414px" width="7" height="4" viewBox="0 0 7 4"><path d="M0 0 H7 L3.5 4Z" fill="#000"/></svg><span class="t k" style="left:199px;top:409px;letter-spacing:-0.16px;">Mustermann1938, Hildegard</span>
<div style="left:18px;top:432px;width:174px;height:22px;background:#fff;border:1px solid #10107c"></div><svg style="left:23px;top:436px" width="14" height="13" viewBox="0 0 14 13"><path d="M1.5 1.5 L12 11.5 M12 1.5 L1.5 11.500" stroke="#d00000" stroke-width="2.2"/></svg><span class="t k" style="left:34px;top:436px;width:155px;text-align:center;">Division</span>
<div style="left:196px;top:430px;width:263px;height:20px;background:#fff;border:1px solid #a8a8c8"></div><div style="left:444px;top:431px;width:14px;height:18px;background:linear-gradient(#f0f0f8,#d0d0e0 45%,#a8a8c8);border-left:1px solid #d4d4e4"></div><svg style="left:448px;top:438px" width="7" height="4" viewBox="0 0 7 4"><path d="M0 0 H7 L3.5 4Z" fill="#000"/></svg><span class="t k" style="left:199px;top:433px;letter-spacing:-0.01px;">Haus(7), St(5)</span>
<!-- tree list -->
<div style="left:4px;top:477px;width:469px;height:579px;background:#5a5a5a;border:1px solid #484848;border-left:none;border-bottom:none"></div><div style="left:4px;top:478px;width:468px;height:577px;overflow:hidden"><div style="left:0px;top:0px;width:17px;height:578px;background:#595959"></div><div style="left:17px;top:0px;width:433px;height:578px;background:#fff"></div><div style="left:0px;top:18px;width:17px;height:1px;background:#4e4e4e"></div><div style="left:52px;top:18px;width:398px;height:1px;background:#5c5c5c"></div><div style="left:52px;top:-1px;width:1px;height:20px;background:#5c5c5c"></div><div style="left:234px;top:-1px;width:1px;height:20px;background:#5c5c5c"></div><div style="left:408px;top:-1px;width:1px;height:20px;background:#5c5c5c"></div><svg style="left:22px;top:9px" width="7" height="5" viewBox="0 0 7 5"><path d="M0 0 H7 L3.5 4.5Z" fill="#c4c4c4"/></svg><svg style="left:35px;top:3px" width="15" height="13" viewBox="0 0 15 13"><path d="M0.5 2.5 L2 0.5 H6 L7 2.5 H13.5 V11.5 H0.5 Z" fill="#8c8cf4" stroke="#1414b4" stroke-width="1"/><path d="M1.5 4.5 H12.5" stroke="#fff" stroke-opacity=".55" stroke-width="1"/><path d="M1.5 12.5 H14.5 V3.5" stroke="#111" stroke-width="1" fill="none"/></svg><span class="t k" style="left:55.3px;top:2px;">Auftr&auml;ge</span>
<div style="left:0px;top:37px;width:17px;height:1px;background:#4e4e4e"></div><div style="left:70px;top:37px;width:380px;height:1px;background:#5c5c5c"></div><div style="left:70px;top:18px;width:1px;height:20px;background:#5c5c5c"></div><div style="left:234px;top:18px;width:1px;height:20px;background:#5c5c5c"></div><div style="left:408px;top:18px;width:1px;height:20px;background:#5c5c5c"></div><svg style="left:40px;top:28px" width="7" height="5" viewBox="0 0 7 5"><path d="M0 0 H7 L3.5 4.5Z" fill="#c4c4c4"/></svg><svg style="left:53px;top:22px" width="15" height="13" viewBox="0 0 15 13"><path d="M0.5 2.5 L2 0.5 H6 L7 2.5 H13.5 V11.5 H0.5 Z" fill="#c070b4" stroke="#5c0c50" stroke-width="1"/><path d="M1.5 4.5 H12.5" stroke="#fff" stroke-opacity=".55" stroke-width="1"/><path d="M1.5 12.5 H14.5 V3.5" stroke="#111" stroke-width="1" fill="none"/></svg><span class="t k" style="left:73.3px;top:21px;">PP124224</span><span class="t k" style="left:237.3px;top:21px;">Test Apotheke 1</span><span class="t k" style="left:411.5px;top:21px;">0</span>
<div style="left:0px;top:56px;width:17px;height:1px;background:#4e4e4e"></div><div style="left:88px;top:38px;width:146px;height:19px;background:linear-gradient(90deg,#ffb6c1,#fff)"></div><div style="left:234px;top:38px;width:174px;height:19px;background:linear-gradient(90deg,#ffb6c1,#fff)"></div><div style="left:408px;top:38px;width:42px;height:19px;background:linear-gradient(90deg,#ffb6c1,#fff)"></div><div style="left:70px;top:56px;width:380px;height:1px;background:#5c5c5c"></div><div style="left:88px;top:37px;width:1px;height:20px;background:#5c5c5c"></div><div style="left:234px;top:37px;width:1px;height:20px;background:#5c5c5c"></div><div style="left:408px;top:37px;width:1px;height:20px;background:#5c5c5c"></div><svg style="left:71px;top:41px" width="15" height="13" viewBox="0 0 15 13"><path d="M0.5 2.5 L2 0.5 H6 L7 2.5 H13.5 V11.5 H0.5 Z" fill="#ffb0b0" stroke="#d00000" stroke-width="1"/><path d="M1.5 12.5 H14.5 V3.5" stroke="#300" stroke-width="1" fill="none"/><path d="M2.5 3 L9.5 10.5 M9.500 3 L2.500 10.500" stroke="#e80000" stroke-width="2.2"/></svg><span class="t k" style="left:91.3px;top:40px;">Haus(34), St(1)</span><span class="t k" style="left:237.3px;top:40px;">Mustermann1005, Apostolos</span><span class="t k" style="left:411.5px;top:40px;">0</span>
<div style="left:0px;top:75px;width:17px;height:1px;background:#4e4e4e"></div><div style="left:70px;top:75px;width:380px;height:1px;background:#5c5c5c"></div><div style="left:70px;top:56px;width:1px;height:20px;background:#5c5c5c"></div><div style="left:234px;top:56px;width:1px;height:20px;background:#5c5c5c"></div><div style="left:408px;top:56px;width:1px;height:20px;background:#5c5c5c"></div><svg style="left:40px;top:66px" width="7" height="5" viewBox="0 0 7 5"><path d="M0 0 H7 L3.5 4.5Z" fill="#c4c4c4"/></svg><svg style="left:53px;top:60px" width="15" height="13" viewBox="0 0 15 13"><path d="M0.5 2.5 L2 0.5 H6 L7 2.5 H13.5 V11.5 H0.5 Z" fill="#c070b4" stroke="#5c0c50" stroke-width="1"/><path d="M1.5 4.5 H12.5" stroke="#fff" stroke-opacity=".55" stroke-width="1"/><path d="M1.5 12.5 H14.5 V3.5" stroke="#111" stroke-width="1" fill="none"/></svg><span class="t k" style="left:73.3px;top:59px;">PP191123</span><span class="t k" style="left:237.3px;top:59px;">Test Apotheke 2</span><span class="t k" style="left:411.5px;top:59px;">0</span>
<div style="left:0px;top:94px;width:17px;height:1px;background:#4e4e4e"></div><div style="left:88px;top:76px;width:146px;height:19px;background:linear-gradient(90deg,#ffb6c1,#fff)"></div><div style="left:234px;top:76px;width:174px;height:19px;background:linear-gradient(90deg,#ffb6c1,#fff)"></div><div style="left:408px;top:76px;width:42px;height:19px;background:linear-gradient(90deg,#ffb6c1,#fff)"></div><div style="left:70px;top:94px;width:380px;height:1px;background:#5c5c5c"></div><div style="left:88px;top:75px;width:1px;height:20px;background:#5c5c5c"></div><div style="left:234px;top:75px;width:1px;height:20px;background:#5c5c5c"></div><div style="left:408px;top:75px;width:1px;height:20px;background:#5c5c5c"></div><svg style="left:71px;top:79px" width="15" height="13" viewBox="0 0 15 13"><path d="M0.5 2.5 L2 0.5 H6 L7 2.5 H13.5 V11.5 H0.5 Z" fill="#ffb0b0" stroke="#d00000" stroke-width="1"/><path d="M1.5 12.5 H14.5 V3.5" stroke="#300" stroke-width="1" fill="none"/><path d="M2.5 3 L9.5 10.5 M9.500 3 L2.500 10.500" stroke="#e80000" stroke-width="2.2"/></svg><span class="t k" style="left:91.3px;top:78px;">Haus(7), St(4)</span><span class="t k" style="left:237.3px;top:78px;">Mustermann1857, Ursula</span><span class="t k" style="left:411.5px;top:78px;">0</span>
<div style="left:0px;top:113px;width:17px;height:1px;background:#4e4e4e"></div><div style="left:70px;top:113px;width:380px;height:1px;background:#5c5c5c"></div><div style="left:70px;top:94px;width:1px;height:20px;background:#5c5c5c"></div><div style="left:234px;top:94px;width:1px;height:20px;background:#5c5c5c"></div><div style="left:408px;top:94px;width:1px;height:20px;background:#5c5c5c"></div><svg style="left:40px;top:104px" width="7" height="5" viewBox="0 0 7 5"><path d="M0 0 H7 L3.5 4.5Z" fill="#c4c4c4"/></svg><svg style="left:53px;top:98px" width="15" height="13" viewBox="0 0 15 13"><path d="M0.5 2.5 L2 0.5 H6 L7 2.5 H13.5 V11.5 H0.5 Z" fill="#c070b4" stroke="#5c0c50" stroke-width="1"/><path d="M1.5 4.5 H12.5" stroke="#fff" stroke-opacity=".55" stroke-width="1"/><path d="M1.5 12.5 H14.5 V3.5" stroke="#111" stroke-width="1" fill="none"/></svg><span class="t k" style="left:73.3px;top:97px;">PP191136</span><span class="t k" style="left:237.3px;top:97px;">Test Apotheke 2</span><span class="t k" style="left:411.5px;top:97px;">1</span>
<div style="left:0px;top:132px;width:17px;height:1px;background:#4e4e4e"></div><svg style="left:6px;top:119px" width="5" height="9" viewBox="0 0 5 9"><path d="M0 0 V9 L5 4.500Z" fill="#f0f0f0"/></svg><div style="left:88px;top:114px;width:146px;height:19px;background:#ffb6c1"></div><div style="left:234px;top:114px;width:174px;height:19px;background:linear-gradient(90deg,#ffb6c1,#ff0000)"></div><div style="left:408px;top:114px;width:42px;height:19px;background:#ffb6c1"></div><div style="left:235px;top:114px;width:173px;height:18px;border:1px dotted #000"></div><div style="left:70px;top:132px;width:380px;height:1px;background:#5c5c5c"></div><div style="left:88px;top:113px;width:1px;height:20px;background:#5c5c5c"></div><div style="left:234px;top:113px;width:1px;height:20px;background:#5c5c5c"></div><div style="left:408px;top:113px;width:1px;height:20px;background:#5c5c5c"></div><svg style="left:71px;top:117px" width="15" height="13" viewBox="0 0 15 13"><path d="M0.5 2.5 L2 0.5 H6 L7 2.5 H13.5 V11.5 H0.5 Z" fill="#ffb0b0" stroke="#d00000" stroke-width="1"/><path d="M1.5 12.5 H14.5 V3.5" stroke="#300" stroke-width="1" fill="none"/><path d="M2.5 3 L9.5 10.5 M9.500 3 L2.500 10.500" stroke="#e80000" stroke-width="2.2"/></svg><span class="t ts" style="left:91.3px;top:116px;">Haus(7), St(5)</span><span class="t k" style="left:237.3px;top:116px;">Mustermann1938, Hildegard</span><span class="t ts" style="left:411.5px;top:116px;">1</span>
<div style="left:0px;top:151px;width:17px;height:1px;background:#4e4e4e"></div><div style="left:70px;top:151px;width:380px;height:1px;background:#5c5c5c"></div><div style="left:70px;top:132px;width:1px;height:20px;background:#5c5c5c"></div><div style="left:234px;top:132px;width:1px;height:20px;background:#5c5c5c"></div><div style="left:408px;top:132px;width:1px;height:20px;background:#5c5c5c"></div><svg style="left:40px;top:142px" width="7" height="5" viewBox="0 0 7 5"><path d="M0 0 H7 L3.5 4.5Z" fill="#c4c4c4"/></svg><svg style="left:53px;top:136px" width="15" height="13" viewBox="0 0 15 13"><path d="M0.5 2.5 L2 0.5 H6 L7 2.5 H13.5 V11.5 H0.5 Z" fill="#c070b4" stroke="#5c0c50" stroke-width="1"/><path d="M1.5 4.5 H12.5" stroke="#fff" stroke-opacity=".55" stroke-width="1"/><path d="M1.5 12.5 H14.5 V3.5" stroke="#111" stroke-width="1" fill="none"/></svg><span class="t k" style="left:73.3px;top:135px;">PP113500</span><span class="t k" style="left:237.3px;top:135px;">Test Apotheke 1</span><span class="t k" style="left:411.5px;top:135px;">1</span>
<div style="left:0px;top:170px;width:17px;height:1px;background:#4e4e4e"></div><div style="left:70px;top:170px;width:380px;height:1px;background:#5c5c5c"></div><div style="left:88px;top:151px;width:1px;height:20px;background:#5c5c5c"></div><div style="left:234px;top:151px;width:1px;height:20px;background:#5c5c5c"></div><div style="left:408px;top:151px;width:1px;height:20px;background:#5c5c5c"></div><svg style="left:71px;top:155px" width="15" height="13" viewBox="0 0 15 13"><path d="M0.5 2.5 L2 0.5 H6 L7 2.5 H13.5 V11.5 H0.5 Z" fill="#ffc060" stroke="#c06000" stroke-width="1"/><path d="M1.5 12.5 H14.5 V3.5" stroke="#310" stroke-width="1" fill="none"/><path d="M2.5 6 H7 V3.8 L11 7 L7 10.2 V8 H2.5Z" fill="#e07000" stroke="#803000" stroke-width=".5"/></svg><span class="t k" style="left:91.3px;top:154px;">Haus(37), St(4)</span><span class="t k" style="left:237.3px;top:154px;">Mustermann265, Hildegard</span><span class="t k" style="left:411.5px;top:154px;">1</span>
<div style="left:0px;top:189px;width:17px;height:1px;background:#4e4e4e"></div><div style="left:70px;top:189px;width:380px;height:1px;background:#5c5c5c"></div><div style="left:70px;top:170px;width:1px;height:20px;background:#5c5c5c"></div><div style="left:234px;top:170px;width:1px;height:20px;background:#5c5c5c"></div><div style="left:408px;top:170px;width:1px;height:20px;background:#5c5c5c"></div><svg style="left:40px;top:180px" width="7" height="5" viewBox="0 0 7 5"><path d="M0 0 H7 L3.5 4.5Z" fill="#c4c4c4"/></svg><svg style="left:53px;top:174px" width="15" height="13" viewBox="0 0 15 13"><path d="M0.5 2.5 L2 0.5 H6 L7 2.5 H13.5 V11.5 H0.5 Z" fill="#c070b4" stroke="#5c0c50" stroke-width="1"/><path d="M1.5 4.5 H12.5" stroke="#fff" stroke-opacity=".55" stroke-width="1"/><path d="M1.5 12.5 H14.5 V3.5" stroke="#111" stroke-width="1" fill="none"/></svg><span class="t k" style="left:73.3px;top:173px;">PP121132</span><span class="t k" style="left:237.3px;top:173px;">Test Apotheke 1</span><span class="t k" style="left:411.5px;top:173px;">1</span>
<div style="left:0px;top:208px;width:17px;height:1px;background:#4e4e4e"></div><div style="left:88px;top:190px;width:146px;height:19px;background:linear-gradient(90deg,#ffb6c1,#fff)"></div><div style="left:234px;top:190px;width:174px;height:19px;background:linear-gradient(90deg,#ffb6c1,#fff)"></div><div style="left:408px;top:190px;width:42px;height:19px;background:linear-gradient(90deg,#ffb6c1,#fff)"></div><div style="left:70px;top:208px;width:380px;height:1px;background:#5c5c5c"></div><div style="left:88px;top:189px;width:1px;height:20px;background:#5c5c5c"></div><div style="left:234px;top:189px;width:1px;height:20px;background:#5c5c5c"></div><div style="left:408px;top:189px;width:1px;height:20px;background:#5c5c5c"></div><svg style="left:71px;top:193px" width="15" height="13" viewBox="0 0 15 13"><path d="M0.5 2.5 L2 0.5 H6 L7 2.5 H13.5 V11.5 H0.5 Z" fill="#ffc060" stroke="#c06000" stroke-width="1"/><path d="M1.5 12.5 H14.5 V3.5" stroke="#310" stroke-width="1" fill="none"/><path d="M2.5 6 H7 V3.8 L11 7 L7 10.2 V8 H2.5Z" fill="#e07000" stroke="#803000" stroke-width=".5"/></svg><span class="t k" style="left:91.3px;top:192px;">Haus(37), St(2)</span><span class="t k" style="left:237.3px;top:192px;">Mustermann1706, Waltraud</span><span class="t k" style="left:411.5px;top:192px;">1</span>
<div style="left:0px;top:227px;width:17px;height:1px;background:#4e4e4e"></div><div style="left:70px;top:227px;width:380px;height:1px;background:#5c5c5c"></div><div style="left:70px;top:208px;width:1px;height:20px;background:#5c5c5c"></div><div style="left:234px;top:208px;width:1px;height:20px;background:#5c5c5c"></div><div style="left:408px;top:208px;width:1px;height:20px;background:#5c5c5c"></div><svg style="left:40px;top:218px" width="7" height="5" viewBox="0 0 7 5"><path d="M0 0 H7 L3.5 4.5Z" fill="#c4c4c4"/></svg><svg style="left:53px;top:212px" width="15" height="13" viewBox="0 0 15 13"><path d="M0.5 2.5 L2 0.5 H6 L7 2.5 H13.5 V11.5 H0.5 Z" fill="#c070b4" stroke="#5c0c50" stroke-width="1"/><path d="M1.5 4.5 H12.5" stroke="#fff" stroke-opacity=".55" stroke-width="1"/><path d="M1.5 12.5 H14.5 V3.5" stroke="#111" stroke-width="1" fill="none"/></svg><span class="t k" style="left:73.3px;top:211px;">PP121241</span><span class="t k" style="left:237.3px;top:211px;">Test Apotheke 1</span><span class="t k" style="left:411.5px;top:211px;">0</span>
<div style="left:0px;top:246px;width:17px;height:1px;background:#4e4e4e"></div><div style="left:88px;top:228px;width:146px;height:19px;background:linear-gradient(90deg,#ffb6c1,#fff)"></div><div style="left:234px;top:228px;width:174px;height:19px;background:linear-gradient(90deg,#ffb6c1,#fff)"></div><div style="left:408px;top:228px;width:42px;height:19px;background:linear-gradient(90deg,#ffb6c1,#fff)"></div><div style="left:88px;top:246px;width:362px;height:1px;background:#5c5c5c"></div><div style="left:88px;top:227px;width:1px;height:20px;background:#5c5c5c"></div><div style="left:234px;top:227px;width:1px;height:20px;background:#5c5c5c"></div><div style="left:408px;top:227px;width:1px;height:20px;background:#5c5c5c"></div><svg style="left:71px;top:231px" width="15" height="13" viewBox="0 0 15 13"><path d="M0.5 2.5 L2 0.5 H6 L7 2.5 H13.5 V11.5 H0.5 Z" fill="#ffb0b0" stroke="#d00000" stroke-width="1"/><path d="M1.5 12.5 H14.5 V3.5" stroke="#300" stroke-width="1" fill="none"/><path d="M2.5 3 L9.5 10.5 M9.500 3 L2.500 10.500" stroke="#e80000" stroke-width="2.2"/></svg><span class="t k" style="left:91.3px;top:230px;">Haus(37), St(4)</span><span class="t k" style="left:237.3px;top:230px;">Mustermann1022, Burkhard</span><span class="t k" style="left:411.5px;top:230px;">1</span>
<div style="left:0px;top:265px;width:17px;height:1px;background:#4e4e4e"></div><div style="left:88px;top:247px;width:146px;height:19px;background:linear-gradient(90deg,#ffb6c1,#fff)"></div><div style="left:234px;top:247px;width:174px;height:19px;background:linear-gradient(90deg,#ffb6c1,#fff)"></div><div style="left:408px;top:247px;width:42px;height:19px;background:linear-gradient(90deg,#ffb6c1,#fff)"></div><div style="left:88px;top:265px;width:362px;height:1px;background:#5c5c5c"></div><div style="left:88px;top:246px;width:1px;height:20px;background:#5c5c5c"></div><div style="left:234px;top:246px;width:1px;height:20px;background:#5c5c5c"></div><div style="left:408px;top:246px;width:1px;height:20px;background:#5c5c5c"></div><svg style="left:71px;top:250px" width="15" height="13" viewBox="0 0 15 13"><path d="M0.5 2.5 L2 0.5 H6 L7 2.5 H13.5 V11.5 H0.5 Z" fill="#ffb0b0" stroke="#d00000" stroke-width="1"/><path d="M1.5 12.5 H14.5 V3.5" stroke="#300" stroke-width="1" fill="none"/><path d="M2.5 3 L9.5 10.5 M9.500 3 L2.500 10.500" stroke="#e80000" stroke-width="2.2"/></svg><span class="t k" style="left:91.3px;top:249px;">Haus(37), St(4)</span><span class="t k" style="left:237.3px;top:249px;">Mustermann1694, Charlotte</span><span class="t k" style="left:411.5px;top:249px;">1</span>
<div style="left:0px;top:284px;width:17px;height:1px;background:#4e4e4e"></div><div style="left:88px;top:266px;width:146px;height:19px;background:linear-gradient(90deg,#ffb6c1,#fff)"></div><div style="left:234px;top:266px;width:174px;height:19px;background:linear-gradient(90deg,#ffb6c1,#fff)"></div><div style="left:408px;top:266px;width:42px;height:19px;background:linear-gradient(90deg,#ffb6c1,#fff)"></div><div style="left:70px;top:284px;width:380px;height:1px;background:#5c5c5c"></div><div style="left:88px;top:265px;width:1px;height:20px;background:#5c5c5c"></div><div style="left:234px;top:265px;width:1px;height:20px;background:#5c5c5c"></div><div style="left:408px;top:265px;width:1px;height:20px;background:#5c5c5c"></div><svg style="left:71px;top:269px" width="15" height="13" viewBox="0 0 15 13"><path d="M0.5 2.5 L2 0.5 H6 L7 2.5 H13.5 V11.5 H0.5 Z" fill="#ffb0b0" stroke="#d00000" stroke-width="1"/><path d="M1.5 12.5 H14.5 V3.5" stroke="#300" stroke-width="1" fill="none"/><path d="M2.5 3 L9.5 10.5 M9.500 3 L2.500 10.500" stroke="#e80000" stroke-width="2.2"/></svg><span class="t k" style="left:91.3px;top:268px;">Haus(37), St(4)</span><span class="t k" style="left:237.3px;top:268px;">Mustermann265, Hildegard</span><span class="t k" style="left:411.5px;top:268px;">0</span>
<div style="left:0px;top:303px;width:17px;height:1px;background:#4e4e4e"></div><div style="left:70px;top:303px;width:380px;height:1px;background:#5c5c5c"></div><div style="left:70px;top:284px;width:1px;height:20px;background:#5c5c5c"></div><div style="left:234px;top:284px;width:1px;height:20px;background:#5c5c5c"></div><div style="left:408px;top:284px;width:1px;height:20px;background:#5c5c5c"></div><svg style="left:40px;top:294px" width="7" height="5" viewBox="0 0 7 5"><path d="M0 0 H7 L3.5 4.5Z" fill="#c4c4c4"/></svg><svg style="left:53px;top:288px" width="15" height="13" viewBox="0 0 15 13"><path d="M0.5 2.5 L2 0.5 H6 L7 2.5 H13.5 V11.5 H0.5 Z" fill="#c070b4" stroke="#5c0c50" stroke-width="1"/><path d="M1.5 4.5 H12.5" stroke="#fff" stroke-opacity=".55" stroke-width="1"/><path d="M1.5 12.5 H14.5 V3.5" stroke="#111" stroke-width="1" fill="none"/></svg><span class="t k" style="left:73.3px;top:287px;">PP121413</span><span class="t k" style="left:237.3px;top:287px;">Test Apotheke 1</span><span class="t k" style="left:411.5px;top:287px;">1</span>
<div style="left:0px;top:322px;width:17px;height:1px;background:#4e4e4e"></div><div style="left:88px;top:304px;width:146px;height:19px;background:linear-gradient(90deg,#ffb6c1,#fff)"></div><div style="left:234px;top:304px;width:174px;height:19px;background:linear-gradient(90deg,#ffb6c1,#fff)"></div><div style="left:408px;top:304px;width:42px;height:19px;background:linear-gradient(90deg,#ffb6c1,#fff)"></div><div style="left:70px;top:322px;width:380px;height:1px;background:#5c5c5c"></div><div style="left:88px;top:303px;width:1px;height:20px;background:#5c5c5c"></div><div style="left:234px;top:303px;width:1px;height:20px;background:#5c5c5c"></div><div style="left:408px;top:303px;width:1px;height:20px;background:#5c5c5c"></div><svg style="left:71px;top:307px" width="15" height="13" viewBox="0 0 15 13"><path d="M0.5 2.5 L2 0.5 H6 L7 2.5 H13.5 V11.5 H0.5 Z" fill="#ffb0b0" stroke="#d00000" stroke-width="1"/><path d="M1.5 12.5 H14.5 V3.5" stroke="#300" stroke-width="1" fill="none"/><path d="M2.5 3 L9.5 10.5 M9.500 3 L2.500 10.500" stroke="#e80000" stroke-width="2.2"/></svg><span class="t k" style="left:91.3px;top:306px;">Haus(37), St(5)</span><span class="t k" style="left:237.3px;top:306px;">Mustermann1693, Edith</span><span class="t k" style="left:411.5px;top:306px;">1</span>
<div style="left:0px;top:341px;width:17px;height:1px;background:#4e4e4e"></div><div style="left:70px;top:341px;width:380px;height:1px;background:#5c5c5c"></div><div style="left:70px;top:322px;width:1px;height:20px;background:#5c5c5c"></div><div style="left:234px;top:322px;width:1px;height:20px;background:#5c5c5c"></div><div style="left:408px;top:322px;width:1px;height:20px;background:#5c5c5c"></div><svg style="left:40px;top:332px" width="7" height="5" viewBox="0 0 7 5"><path d="M0 0 H7 L3.5 4.5Z" fill="#c4c4c4"/></svg><svg style="left:53px;top:326px" width="15" height="13" viewBox="0 0 15 13"><path d="M0.5 2.5 L2 0.5 H6 L7 2.5 H13.5 V11.5 H0.5 Z" fill="#c070b4" stroke="#5c0c50" stroke-width="1"/><path d="M1.5 4.5 H12.5" stroke="#fff" stroke-opacity=".55" stroke-width="1"/><path d="M1.5 12.5 H14.5 V3.5" stroke="#111" stroke-width="1" fill="none"/></svg><span class="t k" style="left:73.3px;top:325px;">PP140948</span><span class="t k" style="left:237.3px;top:325px;">Test Apotheke 1</span><span class="t k" style="left:411.5px;top:325px;">1</span>
<div style="left:0px;top:360px;width:17px;height:1px;background:#4e4e4e"></div><div style="left:88px;top:342px;width:146px;height:19px;background:linear-gradient(90deg,#ffb6c1,#fff)"></div><div style="left:234px;top:342px;width:174px;height:19px;background:linear-gradient(90deg,#ffb6c1,#fff)"></div><div style="left:408px;top:342px;width:42px;height:19px;background:linear-gradient(90deg,#ffb6c1,#fff)"></div><div style="left:88px;top:360px;width:362px;height:1px;background:#5c5c5c"></div><div style="left:88px;top:341px;width:1px;height:20px;background:#5c5c5c"></div><div style="left:234px;top:341px;width:1px;height:20px;background:#5c5c5c"></div><div style="left:408px;top:341px;width:1px;height:20px;background:#5c5c5c"></div><svg style="left:71px;top:345px" width="15" height="13" viewBox="0 0 15 13"><path d="M0.5 2.5 L2 0.5 H6 L7 2.5 H13.5 V11.5 H0.5 Z" fill="#ffb0b0" stroke="#d00000" stroke-width="1"/><path d="M1.5 12.5 H14.5 V3.5" stroke="#300" stroke-width="1" fill="none"/><path d="M2.5 3 L9.5 10.5 M9.500 3 L2.500 10.500" stroke="#e80000" stroke-width="2.2"/></svg><span class="t k" style="left:91.3px;top:344px;">Haus(11), St(1)</span><span class="t k" style="left:237.3px;top:344px;">Mustermann563, Caecilie</span><span class="t k" style="left:411.5px;top:344px;">1</span>
<div style="left:0px;top:379px;width:17px;height:1px;background:#4e4e4e"></div><div style="left:88px;top:361px;width:146px;height:19px;background:linear-gradient(90deg,#ffb6c1,#fff)"></div><div style="left:234px;top:361px;width:174px;height:19px;background:linear-gradient(90deg,#ffb6c1,#fff)"></div><div style="left:408px;top:361px;width:42px;height:19px;background:linear-gradient(90deg,#ffb6c1,#fff)"></div><div style="left:70px;top:379px;width:380px;height:1px;background:#5c5c5c"></div><div style="left:88px;top:360px;width:1px;height:20px;background:#5c5c5c"></div><div style="left:234px;top:360px;width:1px;height:20px;background:#5c5c5c"></div><div style="left:408px;top:360px;width:1px;height:20px;background:#5c5c5c"></div><svg style="left:71px;top:364px" width="15" height="13" viewBox="0 0 15 13"><path d="M0.5 2.5 L2 0.5 H6 L7 2.5 H13.5 V11.5 H0.5 Z" fill="#ffb0b0" stroke="#d00000" stroke-width="1"/><path d="M1.5 12.5 H14.5 V3.5" stroke="#300" stroke-width="1" fill="none"/><path d="M2.5 3 L9.5 10.5 M9.500 3 L2.500 10.500" stroke="#e80000" stroke-width="2.2"/></svg><span class="t k" style="left:91.3px;top:363px;">Haus(11), St(1)</span><span class="t k" style="left:237.3px;top:363px;">Mustermann958, Lotte</span><span class="t k" style="left:411.5px;top:363px;">1</span>
<div style="left:0px;top:398px;width:17px;height:1px;background:#4e4e4e"></div><div style="left:70px;top:398px;width:380px;height:1px;background:#5c5c5c"></div><div style="left:70px;top:379px;width:1px;height:20px;background:#5c5c5c"></div><div style="left:234px;top:379px;width:1px;height:20px;background:#5c5c5c"></div><div style="left:408px;top:379px;width:1px;height:20px;background:#5c5c5c"></div><svg style="left:40px;top:389px" width="7" height="5" viewBox="0 0 7 5"><path d="M0 0 H7 L3.5 4.5Z" fill="#c4c4c4"/></svg><svg style="left:53px;top:383px" width="15" height="13" viewBox="0 0 15 13"><path d="M0.5 2.5 L2 0.5 H6 L7 2.5 H13.5 V11.5 H0.5 Z" fill="#c070b4" stroke="#5c0c50" stroke-width="1"/><path d="M1.5 4.5 H12.5" stroke="#fff" stroke-opacity=".55" stroke-width="1"/><path d="M1.5 12.5 H14.5 V3.5" stroke="#111" stroke-width="1" fill="none"/></svg><span class="t k" style="left:73.3px;top:382px;">PP141006</span><span class="t k" style="left:237.3px;top:382px;">Test Apotheke 1</span><span class="t k" style="left:411.5px;top:382px;">0</span>
<div style="left:0px;top:417px;width:17px;height:1px;background:#4e4e4e"></div><div style="left:88px;top:399px;width:146px;height:19px;background:linear-gradient(90deg,#ffb6c1,#fff)"></div><div style="left:234px;top:399px;width:174px;height:19px;background:linear-gradient(90deg,#ffb6c1,#fff)"></div><div style="left:408px;top:399px;width:42px;height:19px;background:linear-gradient(90deg,#ffb6c1,#fff)"></div><div style="left:70px;top:417px;width:380px;height:1px;background:#5c5c5c"></div><div style="left:88px;top:398px;width:1px;height:20px;background:#5c5c5c"></div><div style="left:234px;top:398px;width:1px;height:20px;background:#5c5c5c"></div><div style="left:408px;top:398px;width:1px;height:20px;background:#5c5c5c"></div><svg style="left:71px;top:402px" width="15" height="13" viewBox="0 0 15 13"><path d="M0.5 2.5 L2 0.5 H6 L7 2.5 H13.5 V11.5 H0.5 Z" fill="#ffb0b0" stroke="#d00000" stroke-width="1"/><path d="M1.5 12.5 H14.5 V3.5" stroke="#300" stroke-width="1" fill="none"/><path d="M2.5 3 L9.5 10.5 M9.500 3 L2.500 10.500" stroke="#e80000" stroke-width="2.2"/></svg><span class="t k" style="left:91.3px;top:401px;">Haus(11), St(4)</span><span class="t k" style="left:237.3px;top:401px;">Mustermann919, Paula</span><span class="t k" style="left:411.5px;top:401px;">0</span>
<div style="left:0px;top:436px;width:17px;height:1px;background:#4e4e4e"></div><div style="left:70px;top:436px;width:380px;height:1px;background:#5c5c5c"></div><div style="left:70px;top:417px;width:1px;height:20px;background:#5c5c5c"></div><div style="left:234px;top:417px;width:1px;height:20px;background:#5c5c5c"></div><div style="left:408px;top:417px;width:1px;height:20px;background:#5c5c5c"></div><svg style="left:40px;top:427px" width="7" height="5" viewBox="0 0 7 5"><path d="M0 0 H7 L3.5 4.5Z" fill="#c4c4c4"/></svg><svg style="left:53px;top:421px" width="15" height="13" viewBox="0 0 15 13"><path d="M0.5 2.5 L2 0.5 H6 L7 2.5 H13.5 V11.5 H0.5 Z" fill="#c070b4" stroke="#5c0c50" stroke-width="1"/><path d="M1.5 4.5 H12.5" stroke="#fff" stroke-opacity=".55" stroke-width="1"/><path d="M1.5 12.5 H14.5 V3.5" stroke="#111" stroke-width="1" fill="none"/></svg><span class="t k" style="left:73.3px;top:420px;">PP141012</span><span class="t k" style="left:237.3px;top:420px;">Test Apotheke 1</span><span class="t k" style="left:411.5px;top:420px;">0</span>
<div style="left:0px;top:455px;width:17px;height:1px;background:#4e4e4e"></div><div style="left:88px;top:455px;width:362px;height:1px;background:#5c5c5c"></div><div style="left:88px;top:436px;width:1px;height:20px;background:#5c5c5c"></div><div style="left:234px;top:436px;width:1px;height:20px;background:#5c5c5c"></div><div style="left:408px;top:436px;width:1px;height:20px;background:#5c5c5c"></div><svg style="left:71px;top:440px" width="15" height="13" viewBox="0 0 15 13"><path d="M0.5 2.5 L2 0.5 H6 L7 2.5 H13.5 V11.5 H0.5 Z" fill="#ffc060" stroke="#c06000" stroke-width="1"/><path d="M1.5 12.5 H14.5 V3.5" stroke="#310" stroke-width="1" fill="none"/><path d="M2.5 6 H7 V3.8 L11 7 L7 10.2 V8 H2.5Z" fill="#e07000" stroke="#803000" stroke-width=".5"/></svg><span class="t k" style="left:91.3px;top:439px;">Haus(11), St(5)</span><span class="t k" style="left:237.3px;top:439px;">Mustermann1067, Gisela</span><span class="t k" style="left:411.5px;top:439px;">1</span>
<div style="left:0px;top:474px;width:17px;height:1px;background:#4e4e4e"></div><div style="left:88px;top:456px;width:146px;height:19px;background:linear-gradient(90deg,#ffb6c1,#fff)"></div><div style="left:234px;top:456px;width:174px;height:19px;background:linear-gradient(90deg,#ffb6c1,#fff)"></div><div style="left:408px;top:456px;width:42px;height:19px;background:linear-gradient(90deg,#ffb6c1,#fff)"></div><div style="left:88px;top:474px;width:362px;height:1px;background:#5c5c5c"></div><div style="left:88px;top:455px;width:1px;height:20px;background:#5c5c5c"></div><div style="left:234px;top:455px;width:1px;height:20px;background:#5c5c5c"></div><div style="left:408px;top:455px;width:1px;height:20px;background:#5c5c5c"></div><svg style="left:71px;top:459px" width="15" height="13" viewBox="0 0 15 13"><path d="M0.5 2.5 L2 0.5 H6 L7 2.5 H13.5 V11.5 H0.5 Z" fill="#ffc060" stroke="#c06000" stroke-width="1"/><path d="M1.5 12.5 H14.5 V3.5" stroke="#310" stroke-width="1" fill="none"/><path d="M2.5 6 H7 V3.8 L11 7 L7 10.2 V8 H2.5Z" fill="#e07000" stroke="#803000" stroke-width=".5"/></svg><span class="t k" style="left:91.3px;top:458px;">Haus(11), St(5)</span><span class="t k" style="left:237.3px;top:458px;">Mustermann1074, Renate</span><span class="t k" style="left:411.5px;top:458px;">1</span>
<div style="left:0px;top:493px;width:17px;height:1px;background:#4e4e4e"></div><div style="left:88px;top:493px;width:362px;height:1px;background:#5c5c5c"></div><div style="left:88px;top:474px;width:1px;height:20px;background:#5c5c5c"></div><div style="left:234px;top:474px;width:1px;height:20px;background:#5c5c5c"></div><div style="left:408px;top:474px;width:1px;height:20px;background:#5c5c5c"></div><svg style="left:71px;top:478px" width="15" height="13" viewBox="0 0 15 13"><path d="M0.5 2.5 L2 0.5 H6 L7 2.5 H13.5 V11.5 H0.5 Z" fill="#ffc060" stroke="#c06000" stroke-width="1"/><path d="M1.5 12.5 H14.5 V3.5" stroke="#310" stroke-width="1" fill="none"/><path d="M2.5 6 H7 V3.8 L11 7 L7 10.2 V8 H2.5Z" fill="#e07000" stroke="#803000" stroke-width=".5"/></svg><span class="t k" style="left:91.3px;top:477px;">Haus(11), St(5)</span><span class="t k" style="left:237.3px;top:477px;">Mustermann1172, Fritz</span><span class="t k" style="left:411.5px;top:477px;">1</span>
<div style="left:0px;top:512px;width:17px;height:1px;background:#4e4e4e"></div><div style="left:88px;top:494px;width:146px;height:19px;background:linear-gradient(90deg,#ffb6c1,#fff)"></div><div style="left:234px;top:494px;width:174px;height:19px;background:linear-gradient(90deg,#ffb6c1,#fff)"></div><div style="left:408px;top:494px;width:42px;height:19px;background:linear-gradient(90deg,#ffb6c1,#fff)"></div><div style="left:88px;top:512px;width:362px;height:1px;background:#5c5c5c"></div><div style="left:88px;top:493px;width:1px;height:20px;background:#5c5c5c"></div><div style="left:234px;top:493px;width:1px;height:20px;background:#5c5c5c"></div><div style="left:408px;top:493px;width:1px;height:20px;background:#5c5c5c"></div><svg style="left:71px;top:497px" width="15" height="13" viewBox="0 0 15 13"><path d="M0.5 2.5 L2 0.5 H6 L7 2.5 H13.5 V11.5 H0.5 Z" fill="#ffc060" stroke="#c06000" stroke-width="1"/><path d="M1.5 12.5 H14.5 V3.5" stroke="#310" stroke-width="1" fill="none"/><path d="M2.5 6 H7 V3.8 L11 7 L7 10.2 V8 H2.5Z" fill="#e07000" stroke="#803000" stroke-width=".5"/></svg><span class="t k" style="left:91.3px;top:496px;">Haus(11), St(5)</span><span class="t k" style="left:237.3px;top:496px;">Mustermann1188, Brigitta</span><span class="t k" style="left:411.5px;top:496px;">0</span>
<div style="left:0px;top:531px;width:17px;height:1px;background:#4e4e4e"></div><div style="left:88px;top:513px;width:146px;height:19px;background:linear-gradient(90deg,#ffb6c1,#fff)"></div><div style="left:234px;top:513px;width:174px;height:19px;background:linear-gradient(90deg,#ffb6c1,#fff)"></div><div style="left:408px;top:513px;width:42px;height:19px;background:linear-gradient(90deg,#ffb6c1,#fff)"></div><div style="left:88px;top:531px;width:362px;height:1px;background:#5c5c5c"></div><div style="left:88px;top:512px;width:1px;height:20px;background:#5c5c5c"></div><div style="left:234px;top:512px;width:1px;height:20px;background:#5c5c5c"></div><div style="left:408px;top:512px;width:1px;height:20px;background:#5c5c5c"></div><svg style="left:71px;top:516px" width="15" height="13" viewBox="0 0 15 13"><path d="M0.5 2.5 L2 0.5 H6 L7 2.5 H13.5 V11.5 H0.5 Z" fill="#ffc060" stroke="#c06000" stroke-width="1"/><path d="M1.5 12.5 H14.5 V3.5" stroke="#310" stroke-width="1" fill="none"/><path d="M2.5 6 H7 V3.8 L11 7 L7 10.2 V8 H2.5Z" fill="#e07000" stroke="#803000" stroke-width=".5"/></svg><span class="t k" style="left:91.3px;top:515px;">Haus(11), St(5)</span><span class="t k" style="left:237.3px;top:515px;">Mustermann1283, Waltraut</span><span class="t k" style="left:411.5px;top:515px;">1</span>
<div style="left:0px;top:550px;width:17px;height:1px;background:#4e4e4e"></div><div style="left:88px;top:532px;width:146px;height:19px;background:linear-gradient(90deg,#ffb6c1,#fff)"></div><div style="left:234px;top:532px;width:174px;height:19px;background:linear-gradient(90deg,#ffb6c1,#fff)"></div><div style="left:408px;top:532px;width:42px;height:19px;background:linear-gradient(90deg,#ffb6c1,#fff)"></div><div style="left:88px;top:550px;width:362px;height:1px;background:#5c5c5c"></div><div style="left:88px;top:531px;width:1px;height:20px;background:#5c5c5c"></div><div style="left:234px;top:531px;width:1px;height:20px;background:#5c5c5c"></div><div style="left:408px;top:531px;width:1px;height:20px;background:#5c5c5c"></div><svg style="left:71px;top:535px" width="15" height="13" viewBox="0 0 15 13"><path d="M0.5 2.5 L2 0.5 H6 L7 2.5 H13.5 V11.5 H0.5 Z" fill="#ffc060" stroke="#c06000" stroke-width="1"/><path d="M1.5 12.5 H14.5 V3.5" stroke="#310" stroke-width="1" fill="none"/><path d="M2.5 6 H7 V3.8 L11 7 L7 10.2 V8 H2.5Z" fill="#e07000" stroke="#803000" stroke-width=".5"/></svg><span class="t k" style="left:91.3px;top:534px;">Haus(11), St(5)</span><span class="t k" style="left:237.3px;top:534px;">Mustermann1320, Helga</span><span class="t k" style="left:411.5px;top:534px;">1</span>
<div style="left:0px;top:569px;width:17px;height:1px;background:#4e4e4e"></div><div style="left:88px;top:551px;width:146px;height:19px;background:linear-gradient(90deg,#ffb6c1,#fff)"></div><div style="left:234px;top:551px;width:174px;height:19px;background:linear-gradient(90deg,#ffb6c1,#fff)"></div><div style="left:408px;top:551px;width:42px;height:19px;background:linear-gradient(90deg,#ffb6c1,#fff)"></div><div style="left:88px;top:569px;width:362px;height:1px;background:#5c5c5c"></div><div style="left:88px;top:550px;width:1px;height:20px;background:#5c5c5c"></div><div style="left:234px;top:550px;width:1px;height:20px;background:#5c5c5c"></div><div style="left:408px;top:550px;width:1px;height:20px;background:#5c5c5c"></div><svg style="left:71px;top:554px" width="15" height="13" viewBox="0 0 15 13"><path d="M0.5 2.5 L2 0.5 H6 L7 2.5 H13.5 V11.5 H0.5 Z" fill="#ffc060" stroke="#c06000" stroke-width="1"/><path d="M1.5 12.5 H14.5 V3.5" stroke="#310" stroke-width="1" fill="none"/><path d="M2.5 6 H7 V3.8 L11 7 L7 10.2 V8 H2.5Z" fill="#e07000" stroke="#803000" stroke-width=".5"/></svg><span class="t k" style="left:91.3px;top:553px;">Haus(11), St(5)</span><span class="t k" style="left:237.3px;top:553px;">Mustermann1337, G&uuml;nter-Erwin</span><span class="t k" style="left:411.5px;top:553px;">0</span>
<div style="left:0px;top:588px;width:17px;height:1px;background:#4e4e4e"></div><div style="left:88px;top:570px;width:146px;height:19px;background:linear-gradient(90deg,#ffb6c1,#fff)"></div><div style="left:234px;top:570px;width:174px;height:19px;background:linear-gradient(90deg,#ffb6c1,#fff)"></div><div style="left:408px;top:570px;width:42px;height:19px;background:linear-gradient(90deg,#ffb6c1,#fff)"></div><div style="left:88px;top:588px;width:362px;height:1px;background:#5c5c5c"></div><div style="left:88px;top:569px;width:1px;height:20px;background:#5c5c5c"></div><div style="left:234px;top:569px;width:1px;height:20px;background:#5c5c5c"></div><div style="left:408px;top:569px;width:1px;height:20px;background:#5c5c5c"></div><svg style="left:71px;top:573px" width="15" height="13" viewBox="0 0 15 13"><path d="M0.5 2.5 L2 0.5 H6 L7 2.5 H13.5 V11.5 H0.5 Z" fill="#ffc060" stroke="#c06000" stroke-width="1"/><path d="M1.5 12.5 H14.5 V3.5" stroke="#310" stroke-width="1" fill="none"/><path d="M2.5 6 H7 V3.8 L11 7 L7 10.2 V8 H2.5Z" fill="#e07000" stroke="#803000" stroke-width=".5"/></svg><span class="t k" style="left:91.3px;top:572px;">Haus(11), St(5)</span><span class="t k" style="left:237.3px;top:572px;">Mustermann593, Werner</span><span class="t k" style="left:411.5px;top:572px;">0</span>
<div style="left:450px;top:0px;width:18px;height:578px;background:#5b5b5b"></div><svg style="left:456px;top:6px" width="7" height="4" viewBox="0 0 7 4"><path d="M0 4 H7 L3.5 0Z" fill="#c8c8c8"/></svg><svg style="left:456px;top:567px" width="7" height="4" viewBox="0 0 7 4"><path d="M0 0 H7 L3.5 4Z" fill="#c8c8c8"/></svg><div style="left:456px;top:18px;width:7px;height:46px;background:linear-gradient(90deg,#e0e0e0,#9c9c9c);border-radius:3.5px"></div></div>
<div style="left:476px;top:601px;width:3px;height:18px;background:repeating-linear-gradient(#9a9a9a 0 1px,rgba(0,0,0,0) 1px 2px)"></div><!-- right panel: Patient -->
<div style="left:481px;top:163px;width:1238px;height:894px;background:#5b5b5b"></div><div style="left:481px;top:164px;width:1px;height:893px;background:#4e4e4e"></div><div style="left:482px;top:164px;width:1234px;height:27px;background:#4c4c4c"></div><div style="left:490px;top:167px;width:81px;height:25px;background:#606060;border:1px solid #6a6a6a;border-bottom:none;border-radius:2px 2px 0 0"></div><div style="left:506px;top:173px;width:12px;height:12px;border-radius:50%;background:radial-gradient(circle 9.4px at 36% 32%,#c8ffc8 0%,#08d010 24%,#08d010 46%,#023c04 100%)"></div><span class="t ma" style="left:521.5px;top:172px;letter-spacing:0.14px;">Patient</span><svg style="left:1693px;top:170px" width="16" height="16" viewBox="0 0 16 16"><defs><linearGradient id="g28" x1="0" y1="0" x2="0" y2="1"><stop offset="0" stop-color="#ffb000"/><stop offset="0.55" stop-color="#ffe800"/><stop offset="1" stop-color="#fff400"/></linearGradient><linearGradient id="g29" x1="0" y1="0" x2="1" y2="0"><stop offset="0" stop-color="#ffffff"/><stop offset="1" stop-color="#a8a8b0"/></linearGradient></defs><circle cx="8" cy="8" r="7.6" fill="url(#g28)" stroke="#805000" stroke-width=".7" stroke-dasharray="1.2 .6"/><path d="M5 5.300 Q5 2.400 8.200 2.400 Q11.300 2.400 11.300 5 Q11.300 6.600 9.800 7.600 Q9.100 8.100 9.100 9.600 H7.100 Q7 7.600 8.200 6.700 Q9.100 6 9.100 5.100 Q9.100 4.100 8.100 4.100 Q7 4.100 6.900 5.300Z M7 10.800 H9.200 V13 H7Z" fill="url(#g29)" stroke="#202060" stroke-width=".6"/></svg><div style="left:482px;top:191px;width:1236px;height:92px;background:linear-gradient(#626262,#5d5d5d 70%,#595959)"></div><div style="left:482px;top:283px;width:1236px;height:2px;background:#484848"></div><div style="left:482px;top:285px;width:1236px;height:4px;background:#585858"></div><div style="left:953px;top:193px;width:1px;height:89px;background:#4a4a4a"></div><div style="left:954px;top:193px;width:1px;height:89px;background:#686868"></div><div style="left:490px;top:263px;width:456px;height:1px;background:linear-gradient(90deg,rgba(80,80,80,0),#525252 15%,#525252 85%,rgba(80,80,80,0))"></div><svg style="left:943px;top:273px" width="5" height="5" viewBox="0 0 5 5"><path d="M5 0 V5 H0 Z" fill="#9a9a9a"/></svg><span class="t gl" style="left:690px;top:266px;letter-spacing:0.04px;">Patient</span>
<svg style="left:491px;top:196px" width="32" height="32" viewBox="0 0 32 32"><defs><linearGradient id="g30" x1="0" y1="0" x2="0" y2="1"><stop offset="0" stop-color="#f4f4f4"/><stop offset="1" stop-color="#c0c0c0"/></linearGradient><linearGradient id="g31" x1="0" y1="0" x2="1" y2="0"><stop offset="0" stop-color="#2c2c2c"/><stop offset="0.09" stop-color="#8a8a8a"/><stop offset="0.16" stop-color="#ececec"/><stop offset="0.5" stop-color="#fbfbfb"/><stop offset="0.84" stop-color="#d0d0d0"/><stop offset="0.91" stop-color="#808080"/><stop offset="1" stop-color="#2c2c2c"/></linearGradient><linearGradient id="g32" x1="0" y1="0" x2="0" y2="1"><stop offset="0" stop-color="#c0f040"/><stop offset="1" stop-color="#70b010"/></linearGradient></defs><rect x="6.5" y="0.5" width="19" height="12" fill="url(#g30)" stroke="#fff" stroke-width="1"/><rect x="0.3" y="10.5" width="31.4" height="17" rx="2" fill="url(#g31)"/><rect x="5" y="11" width="21.5" height="7.6" rx="1" fill="url(#g32)" stroke="#70b010" stroke-width=".5"/><rect x="6.2" y="23.2" width="19.6" height="8.5" fill="#fff" stroke="#d0d0d0" stroke-width=".5"/><path d="M8 25.5 H24 M8 27.3 H21" stroke="#303030" stroke-width="1" stroke-dasharray="3 .6 2 .4"/></svg><span class="t rb" style="left:447px;top:232px;width:120px;text-align:center;letter-spacing:0.90px;">Print</span>
<svg style="left:547px;top:196px" width="27" height="32" viewBox="0 0 27 32"><g transform="rotate(-19 19 30)"><path d="M9.5 0.5 H20 L25.5 6 V26.5 H9.5Z" fill="#e4f0ff" stroke="#3078d0" stroke-width=".9"/></g><g transform="rotate(-9.5 19 30)"><path d="M9.5 0.5 H20 L25.5 6 V26.5 H9.5Z" fill="#e4f0ff" stroke="#3078d0" stroke-width=".9"/></g><path d="M9.5 0.5 H20 L25.5 6 V26.5 H9.5Z" fill="#dcecff" stroke="#3078d0" stroke-width=".9"/><path d="M20 0.5 V6 H25.5" fill="#fff" stroke="#3078d0" stroke-width=".7"/><path d="M11.5 10.5 H23.5" stroke="#9090d8" stroke-width=".8"/><path d="M11.5 13.5 H23.5 M11.5 15.5 H23.5 M11.5 17.5 H23.5 M11.5 19.5 H23.5" stroke="#2880d8" stroke-width="1"/></svg><span class="t rb" style="left:502px;top:232px;width:120px;text-align:center;letter-spacing:0.14px;">Selection</span><span class="t rb" style="left:502px;top:245px;width:120px;text-align:center;letter-spacing:0.41px;">Report</span>
<svg style="left:611.5px;top:196px" width="33" height="32" viewBox="0 0 33 32"><defs><linearGradient id="g33" x1="0" y1="0" x2="0" y2="1"><stop offset="0" stop-color="#38a0d8"/><stop offset="0.45" stop-color="#1470b0"/><stop offset="0.5" stop-color="#0c4888"/><stop offset="1" stop-color="#18a0c8"/></linearGradient></defs><path d="M10 4 V1.5 H21 V4" fill="none" stroke="#103878" stroke-width="1.8"/><rect x="0.5" y="3.5" width="29.5" height="22.5" rx="2.5" fill="url(#g33)" stroke="#0c3c78" stroke-width=".8"/><rect x="0.8" y="9.5" width="29" height="1.5" fill="#0a2c60"/><circle cx="15" cy="11" r="2" fill="#f0b030"/><path d="M15 10.5 H27 L31.5 15 V31 H15Z" fill="#f8f8f8" stroke="#505050" stroke-width=".8"/><path d="M27 10.5 V15 H31.5" fill="#d0d8e8" stroke="#505050" stroke-width=".6"/><path d="M17.5 18.5 H29 M17.5 21.5 H29 M17.5 24.5 H29 M17.5 27.5 H29" stroke="#202020" stroke-width="1.1"/></svg><span class="t rb" style="left:568px;top:232px;width:120px;text-align:center;letter-spacing:0.39px;">Document</span><span class="t rb" style="left:568px;top:245px;width:120px;text-align:center;letter-spacing:0.71px;">view</span>
<svg style="left:689.5px;top:202px" width="32" height="24" viewBox="0 0 32 24"><defs><linearGradient id="g34" x1="0" y1="0" x2="0" y2="1"><stop offset="0" stop-color="#ffe070"/><stop offset="1" stop-color="#e8a010"/></linearGradient></defs><rect x="0.5" y="0.5" width="30" height="19" fill="#e8f4ff" stroke="#3080e0" stroke-width=".8"/><rect x="0.5" y="0.5" width="30" height="3.5" fill="#3890f0"/><path d="M0.5 7.5 H30.5 M0.5 11.5 H30.5 M0.5 15.5 H30.5 M11 4 V19.5 M21 4 V19.5" stroke="#60a8f0" stroke-width=".8"/><path d="M21.5 14 V11.5 Q21.500 8 25 8 Q28.500 8 28.500 11.500 V14" fill="none" stroke="#c8c8c8" stroke-width="1.8"/><rect x="19" y="13.5" width="12" height="9.5" rx="1.2" fill="url(#g34)" stroke="#c08000" stroke-width=".6"/><rect x="24.3" y="16" width="1.5" height="4" fill="#805000"/></svg><span class="t rb" style="left:645.5px;top:232px;width:120px;text-align:center;letter-spacing:0.27px;">Documenting</span><span class="t rb" style="left:645.5px;top:245px;width:120px;text-align:center;letter-spacing:1.00px;">patient</span>
<svg style="left:777px;top:196px" width="33" height="33" viewBox="0 0 33 33"><defs><linearGradient id="g35" x1="0" y1="0" x2="0" y2="1"><stop offset="0" stop-color="#50b0f0"/><stop offset="1" stop-color="#1468b8"/></linearGradient><linearGradient id="g36" x1="0" y1="0" x2="1" y2="0"><stop offset="0" stop-color="#88c8f0"/><stop offset="0.45" stop-color="#2880d0"/><stop offset="1" stop-color="#b0d8f8"/></linearGradient><linearGradient id="g37" x1="0" y1="0" x2="0" y2="1"><stop offset="0" stop-color="#ff5040"/><stop offset="0.5" stop-color="#e80808"/><stop offset="1" stop-color="#ff4040"/></linearGradient></defs><path d="M0.1999999999999993 8.4 V11.600000000000001 A8.5 3.8 0 0 0 17.2 11.600000000000001 V8.4Z" fill="url(#g36)"/><ellipse cx="8.7" cy="8.4" rx="8.5" ry="3.8" fill="url(#g35)"/><path d="M0.1999999999999993 4.0 V7.2 A8.5 3.8 0 0 0 17.2 7.2 V4.0Z" fill="url(#g36)"/><ellipse cx="8.7" cy="4.0" rx="8.5" ry="3.8" fill="url(#g35)"/><path d="M15.100000000000001 25.700000000000003 V29.900000000000002 A8.5 3.8 0 0 0 32.1 29.900000000000002 V25.700000000000003Z" fill="url(#g36)"/><ellipse cx="23.6" cy="25.700000000000003" rx="8.5" ry="3.8" fill="url(#g35)"/><path d="M15.100000000000001 20.3 V24.5 A8.5 3.8 0 0 0 32.1 24.5 V20.3Z" fill="url(#g36)"/><ellipse cx="23.6" cy="20.3" rx="8.5" ry="3.8" fill="url(#g35)"/><path d="M15.100000000000001 14.9 V19.1 A8.5 3.8 0 0 0 32.1 19.1 V14.9Z" fill="url(#g36)"/><ellipse cx="23.6" cy="14.9" rx="8.5" ry="3.8" fill="url(#g35)"/><path d="M15.100000000000001 9.5 V13.7 A8.5 3.8 0 0 0 32.1 13.7 V9.5Z" fill="url(#g36)"/><ellipse cx="23.6" cy="9.5" rx="8.5" ry="3.8" fill="url(#g35)"/><rect x="0.7" y="16.2" width="23.3" height="8.8" fill="url(#g37)" stroke="#ffd0b0" stroke-width="1"/></svg><span class="t rb" style="left:733px;top:232px;width:120px;text-align:center;letter-spacing:0.22px;">Patient</span><span class="t rb" style="left:733px;top:245px;width:120px;text-align:center;letter-spacing:0.38px;">(order) Delete</span>
<svg style="left:852px;top:198.5px" width="31" height="26" viewBox="0 0 31 26"><defs><radialGradient id="g38" cx="0.4" cy="0.35" r="0.7"><stop offset="0" stop-color="#40c0ff"/><stop offset="1" stop-color="#0078d0"/></radialGradient></defs><path d="M5.5 20 H25.5" stroke="#404040" stroke-width=".8"/><circle cx="15.5" cy="4.9" r="4.8" fill="url(#g38)"/><circle cx="5.2" cy="20" r="4.8" fill="url(#g38)"/><circle cx="25.5" cy="20" r="4.8" fill="url(#g38)"/><path d="M11.5 13 L14.8 16.8 L20.5 10.8" fill="none" stroke="#30b030" stroke-width="2.4"/></svg><span class="t rb" style="left:808px;top:232px;width:120px;text-align:center;letter-spacing:0.43px;">Forward</span><span class="t rb" style="left:808px;top:245px;width:120px;text-align:center;letter-spacing:1.00px;">patient</span>
<svg style="left:907px;top:198.5px" width="31" height="26" viewBox="0 0 31 26"><defs><radialGradient id="g39" cx="0.4" cy="0.35" r="0.7"><stop offset="0" stop-color="#a8a8a8"/><stop offset="1" stop-color="#808080"/></radialGradient></defs><path d="M5.5 20 H25.5 L15.5 4.5 Z" fill="none" stroke="#8c8c8c" stroke-width="1"/><circle cx="15.5" cy="4.9" r="4.8" fill="url(#g39)"/><circle cx="5.2" cy="20" r="4.8" fill="url(#g39)"/><circle cx="25.5" cy="20" r="4.8" fill="url(#g39)"/><path d="M12.5 11 L18.5 17.5 M18.500 11 L12.500 17.500" stroke="#a8a8a8" stroke-width="2"/></svg><span class="t rbd" style="left:863px;top:232px;width:120px;text-align:center;letter-spacing:0.51px;">Reset</span><span class="t rbd" style="left:863px;top:245px;width:120px;text-align:center;letter-spacing:0.32px;">patient</span>
<div style="left:482px;top:288px;width:1236px;height:119px;background:#575757;border:1px solid #4b4b4b"></div><span class="t ma" style="left:488.5px;top:291px;letter-spacing:0.14px;">Patient</span><div style="left:483px;top:308px;width:1233px;height:98px;background:linear-gradient(90deg,#c0ffff,#00be00)"></div><div style="left:482px;top:406px;width:1236px;height:2px;background:#4a4a4a"></div><span class="t pl" style="left:495px;top:323px;letter-spacing:0.18px;">Auftragstype:</span><span class="t pl" style="left:495px;top:346.7px;letter-spacing:-0.38px;">Machine:</span><div style="left:567px;top:320px;width:138px;height:20px;background:#90ee90;border:1px solid #a8a8c8"></div><div style="left:690px;top:321px;width:14px;height:18px;background:linear-gradient(#f0f0f8,#d0d0e0 45%,#a8a8c8);border-left:1px solid #d4d4e4"></div><svg style="left:694px;top:328px" width="7" height="4" viewBox="0 0 7 4"><path d="M0 0 H7 L3.5 4Z" fill="#000"/></svg><span class="t k" style="left:570px;top:323px;letter-spacing:-0.29px;">Normal</span>
<div style="left:567px;top:344px;width:138px;height:20px;background:#fff;border:1px solid #a8a8c8"></div><div style="left:690px;top:345px;width:14px;height:18px;background:linear-gradient(#f0f0f8,#d0d0e0 45%,#a8a8c8);border-left:1px solid #d4d4e4"></div><svg style="left:694px;top:352px" width="7" height="4" viewBox="0 0 7 4"><path d="M0 0 H7 L3.5 4Z" fill="#000"/></svg><span class="t k" style="left:570px;top:347px;letter-spacing:-0.10px;">Tosho2</span>
<span class="t pl2" style="left:708.5px;top:323px;letter-spacing:-0.13px;">Heim/Station:</span><span class="t pl2" style="left:708.5px;top:346.7px;letter-spacing:0.03px;">Patient:</span><div style="left:781px;top:320px;width:922px;height:20px;background:#fff;border:1px solid #a8a8c8"></div><div style="left:781px;top:344px;width:922px;height:20px;background:#fff;border:1px solid #a8a8c8"></div><span class="t kb" style="left:784px;top:322.5px;letter-spacing:0.31px;">Haus(7), St(5)</span><span class="t kb" style="left:784px;top:346.5px;letter-spacing:-0.07px;">Mustermann1938, Hildegard</span>
<div style="left:482px;top:438px;width:1236px;height:1px;background:#484848"></div><div style="left:556px;top:415px;width:88px;height:24px;background:#585858;border:1px solid #474747"></div><div style="left:483px;top:413px;width:74px;height:26px;background:#606060;border:1px solid #474747;border-bottom:none"></div><div style="left:495px;top:420px;width:12px;height:12px;border-radius:50%;background:radial-gradient(circle 9.4px at 36% 32%,#c8ffc8 0%,#08d010 24%,#08d010 46%,#023c04 100%)"></div><span class="t ma" style="left:512px;top:419px;letter-spacing:-0.14px;">Tablets</span><div style="left:567px;top:421px;width:12px;height:12px;border-radius:50%;background:radial-gradient(circle 9.4px at 36% 32%,#f0c8ff 0%,#9808e0 24%,#9808e0 46%,#300050 100%)"></div><span class="t gl2" style="left:583.5px;top:420px;letter-spacing:-0.30px;">Medication</span><div style="left:482px;top:439px;width:1236px;height:3px;background:#555"></div><div style="left:482px;top:441px;width:1236px;height:92px;background:linear-gradient(#626262,#5d5d5d 70%,#595959)"></div><div style="left:482px;top:533px;width:1236px;height:2px;background:#484848"></div><div style="left:482px;top:535px;width:1236px;height:4px;background:#585858"></div><div style="left:773px;top:443px;width:1px;height:89px;background:#4a4a4a"></div><div style="left:774px;top:443px;width:1px;height:89px;background:#686868"></div><div style="left:490px;top:514px;width:276px;height:1px;background:linear-gradient(90deg,rgba(80,80,80,0),#525252 15%,#525252 85%,rgba(80,80,80,0))"></div><svg style="left:763px;top:524px" width="5" height="5" viewBox="0 0 5 5"><path d="M5 0 V5 H0 Z" fill="#9a9a9a"/></svg><svg style="left:491px;top:447px" width="32" height="32" viewBox="0 0 32 32"><defs><linearGradient id="g40" x1="0" y1="0" x2="0" y2="1"><stop offset="0" stop-color="#f4f4f4"/><stop offset="1" stop-color="#c0c0c0"/></linearGradient><linearGradient id="g41" x1="0" y1="0" x2="1" y2="0"><stop offset="0" stop-color="#2c2c2c"/><stop offset="0.09" stop-color="#8a8a8a"/><stop offset="0.16" stop-color="#ececec"/><stop offset="0.5" stop-color="#fbfbfb"/><stop offset="0.84" stop-color="#d0d0d0"/><stop offset="0.91" stop-color="#808080"/><stop offset="1" stop-color="#2c2c2c"/></linearGradient><linearGradient id="g42" x1="0" y1="0" x2="0" y2="1"><stop offset="0" stop-color="#ff5040"/><stop offset="1" stop-color="#d00000"/></linearGradient></defs><rect x="6.5" y="0.5" width="19" height="12" fill="url(#g40)" stroke="#fff" stroke-width="1"/><rect x="0.3" y="10.5" width="31.4" height="17" rx="2" fill="url(#g41)"/><rect x="5" y="11" width="21.5" height="7.6" rx="1" fill="url(#g42)" stroke="#d00000" stroke-width=".5"/><rect x="6.2" y="23.2" width="19.6" height="8.5" fill="#fff" stroke="#d0d0d0" stroke-width=".5"/><path d="M8 25.5 H24 M8 27.3 H21" stroke="#303030" stroke-width="1" stroke-dasharray="3 .6 2 .4"/></svg><span class="t rb" style="left:447px;top:483px;width:120px;text-align:center;letter-spacing:0.90px;">Print</span>
<svg style="left:538.3px;top:448px" width="32" height="30" viewBox="0 0 32 30"><path d="M0.5 6.5 L17 0.5 L31.5 5 V21.5 L13.5 29.5 L0.5 23.5Z" fill="#d8a060"/><path d="M0.5 6.5 L17 0.5 L31.5 5 L13.5 11.5Z" fill="#f0c890"/><path d="M13.5 11.5 L31.5 5 V21.5 L13.5 29.5Z" fill="#e0a868"/><path d="M0.5 6.5 L13.5 11.5 V29.5 L0.5 23.5Z" fill="#e8b478"/><path d="M8 3.6 L23 8 " stroke="#c89858" stroke-width="1.6"/><path d="M3 13 l6 2.4 M3 15 l6 2.400 M3 17 l6 2.400" stroke="#b88848" stroke-width=".8"/><path d="M0.5 6.5 L17 0.5 L31.5 5 V21.5 L13.5 29.5 L0.5 23.5Z M13.5 11.5 V29.5" fill="none" stroke="#a87838" stroke-width=".6"/></svg><span class="t rb" style="left:494px;top:483px;width:120px;text-align:center;letter-spacing:0.29px;">Blister</span>
<svg style="left:604px;top:447.4px" width="32" height="32" viewBox="0 0 32 32"><defs><radialGradient id="g43" cx="0.4" cy="0.3" r="0.8"><stop offset="0" stop-color="#ffffff"/><stop offset="1" stop-color="#c4c8d4"/></radialGradient></defs><ellipse cx="16.500" cy="6.300" rx="7" ry="5.800" transform="rotate(-12 16.500 6.300)" fill="url(#g43)"/><path d="M11.300 7.500 Q15.500 1.800 22 4.300 Q23.200 8.800 17.800 10 Q12.800 10.800 11.300 7.500Z" fill="#101018"/><path d="M13.600 7.200 l2.800 -1.800 l0.700 1.500 l-2.800 1.300z M18 5 l2.600 -.6 l.4 1.500 l-2.600 .9z" fill="#30a8ff"/><path d="M9.500 14 Q16 10.500 22.500 14 Q23.500 22 20 27.500 Q16 31.500 12 27.500 Q8.500 22 9.500 14Z" fill="url(#g43)"/><path d="M8.800 14.500 Q5 19 4.600 26.500 Q7.200 22 9.300 19.500Z" fill="#f4f4f8"/><path d="M23.200 14.500 Q27 19 27.400 26.500 Q24.800 22 22.700 19.500Z" fill="#e4e4ec"/><circle cx="17" cy="18" r=".8" fill="#ff6080"/><circle cx="15.200" cy="18.300" r=".6" fill="#60c8ff"/></svg><span class="t rb" style="left:560px;top:483px;width:120px;text-align:center;letter-spacing:0.31px;">Outsourcing</span>
<svg style="left:699.4px;top:447.4px" width="32" height="32" viewBox="0 0 32 32"><defs><radialGradient id="g44" cx="0.4" cy="0.3" r="0.8"><stop offset="0" stop-color="#ececec"/><stop offset="1" stop-color="#b4b4b4"/></radialGradient></defs><path d="M9.300 7 Q9.300 0.800 16 0.800 Q22.700 0.800 22.700 7 L23.300 16 Q23.300 22 20 26.500 Q16 30 12 26.500 Q8.700 22 8.700 16Z" fill="url(#g44)"/><path d="M10.300 6.300 Q16 2.300 21.700 6.300 Q21.500 9.200 16 9.400 Q10.500 9.200 10.300 6.300Z" fill="#9c9c9c"/><path d="M12.500 6.300 h2.600 M17 6.300 h2.600" stroke="#b8b8b8" stroke-width=".8"/></svg><span class="t rbd" style="left:655.2px;top:483px;width:120px;text-align:center;letter-spacing:0.14px;">Stop Outsourcing</span>

<!-- medication grid -->
<div style="left:482px;top:538px;width:1236px;height:516px;background:#fff;border:1px solid #3c3c3c;border-width:1px 2px 2px 1px"></div><div style="left:483px;top:539px;width:1233px;height:21px;background:#5a5a5a"></div><div style="left:483px;top:560px;width:15px;height:168px;background:#595959"></div><div style="left:497px;top:539px;width:1px;height:21px;background:#484848"></div><span class="t gh" style="left:501px;top:542px;letter-spacing:-0.26px;">Designation</span><div style="left:834px;top:539px;width:1px;height:21px;background:#484848"></div><span class="t gh" style="left:838px;top:542px;letter-spacing:-0.07px;">Manufacturer</span><div style="left:977px;top:539px;width:1px;height:21px;background:#484848"></div><span class="t gh" style="left:981px;top:542px;letter-spacing:-0.17px;">Administration</span><div style="left:1126px;top:539px;width:1px;height:21px;background:#484848"></div><span class="t gh" style="left:1130px;top:542px;letter-spacing:0.14px;">Index</span><div style="left:1235px;top:539px;width:1px;height:21px;background:#484848"></div><span class="t gh" style="left:1239px;top:542px;letter-spacing:-0.16px;">Cassette</span><div style="left:1341px;top:539px;width:1px;height:21px;background:#484848"></div><span class="t gh" style="left:1345px;top:542px;letter-spacing:-0.03px;">Contract</span><div style="left:1445px;top:539px;width:1px;height:21px;background:#484848"></div><span class="t gh" style="left:1449px;top:542px;letter-spacing:-0.48px;">Stock</span><div style="left:1522px;top:539px;width:1px;height:21px;background:#484848"></div><span class="t gh" style="left:1526px;top:542px;letter-spacing:-0.24px;">Description</span>
<div style="left:497px;top:560px;width:1218px;height:21px;background:linear-gradient(90deg,#ffa000,#ff0000)"></div><svg style="left:488px;top:567px" width="4" height="7" viewBox="0 0 4 7"><path d="M0 0 V7 L4 3.500Z" fill="#d8d8d8"/></svg><div style="left:483px;top:580px;width:15px;height:1px;background:#4e4e4e"></div><div style="left:497px;top:580px;width:1219px;height:1px;background:#5a5a5a"></div><div style="left:497px;top:560px;width:1px;height:21px;background:#5a5a5a"></div><span class="t g" style="left:501px;top:563px;letter-spacing:0.03px;">Donepezil Hcl Basics 10mg</span><div style="left:834px;top:560px;width:1px;height:21px;background:#5a5a5a"></div><span class="t g" style="left:838px;top:563px;">Basic</span><div style="left:977px;top:560px;width:1px;height:21px;background:#5a5a5a"></div><span class="t g" style="left:981px;top:563px;">Fta</span><div style="left:1126px;top:560px;width:1px;height:21px;background:#5a5a5a"></div><span class="t g" style="left:1130px;top:563px;letter-spacing:0.49px;">8845300</span><div style="left:1235px;top:560px;width:1px;height:21px;background:#5a5a5a"></div><span class="t g" style="left:1239px;top:563px;">362</span><div style="left:1341px;top:560px;width:1px;height:21px;background:#5a5a5a"></div><span class="t g" style="left:1342px;top:563px;width:101.4px;text-align:right;letter-spacing:.4px;">7</span><div style="left:1445px;top:560px;width:1px;height:21px;background:#5a5a5a"></div><span class="t g" style="left:1446px;top:563px;width:74.4px;text-align:right;letter-spacing:.4px;">487</span><div style="left:1522px;top:560px;width:1px;height:21px;background:#5a5a5a"></div>
<div style="left:483px;top:601px;width:15px;height:1px;background:#4e4e4e"></div><div style="left:497px;top:601px;width:1219px;height:1px;background:#5a5a5a"></div><div style="left:497px;top:581px;width:1px;height:21px;background:#5a5a5a"></div><span class="t g" style="left:501px;top:584px;letter-spacing:0.08px;">Nortrilen Dragees 25mg</span><div style="left:834px;top:581px;width:1px;height:21px;background:#5a5a5a"></div><span class="t g" style="left:838px;top:584px;">Lundb</span><div style="left:977px;top:581px;width:1px;height:21px;background:#5a5a5a"></div><span class="t g" style="left:981px;top:584px;">Uta</span><div style="left:1126px;top:581px;width:1px;height:21px;background:#5a5a5a"></div><span class="t g" style="left:1130px;top:584px;letter-spacing:0.49px;">1440988</span><div style="left:1235px;top:581px;width:1px;height:21px;background:#5a5a5a"></div><span class="t g" style="left:1239px;top:584px;">0</span><div style="left:1341px;top:581px;width:1px;height:21px;background:#5a5a5a"></div><span class="t g" style="left:1342px;top:584px;width:101.4px;text-align:right;letter-spacing:.4px;">7</span><div style="left:1445px;top:581px;width:1px;height:21px;background:#5a5a5a"></div><span class="t g" style="left:1446px;top:584px;width:74.4px;text-align:right;letter-spacing:.4px;">79</span><div style="left:1522px;top:581px;width:1px;height:21px;background:#5a5a5a"></div>
<div style="left:483px;top:622px;width:15px;height:1px;background:#4e4e4e"></div><div style="left:497px;top:622px;width:1219px;height:1px;background:#5a5a5a"></div><div style="left:497px;top:602px;width:1px;height:21px;background:#5a5a5a"></div><span class="t g" style="left:501px;top:605px;letter-spacing:-0.10px;">Novaminsulfon Lichten500mg</span><div style="left:834px;top:602px;width:1px;height:21px;background:#5a5a5a"></div><span class="t g" style="left:838px;top:605px;">Winth</span><div style="left:977px;top:602px;width:1px;height:21px;background:#5a5a5a"></div><span class="t g" style="left:981px;top:605px;">Fta</span><div style="left:1126px;top:602px;width:1px;height:21px;background:#5a5a5a"></div><span class="t g" style="left:1130px;top:605px;letter-spacing:0.49px;">1798000</span><div style="left:1235px;top:602px;width:1px;height:21px;background:#5a5a5a"></div><span class="t g" style="left:1239px;top:605px;">28</span><div style="left:1341px;top:602px;width:1px;height:21px;background:#5a5a5a"></div><span class="t g" style="left:1342px;top:605px;width:101.4px;text-align:right;letter-spacing:.4px;">7</span><div style="left:1445px;top:602px;width:1px;height:21px;background:#5a5a5a"></div><span class="t g" style="left:1446px;top:605px;width:74.4px;text-align:right;letter-spacing:.4px;">6600</span><div style="left:1522px;top:602px;width:1px;height:21px;background:#5a5a5a"></div>
<div style="left:483px;top:643px;width:15px;height:1px;background:#4e4e4e"></div><div style="left:497px;top:643px;width:1219px;height:1px;background:#5a5a5a"></div><div style="left:497px;top:623px;width:1px;height:21px;background:#5a5a5a"></div><span class="t g" style="left:501px;top:626px;letter-spacing:-0.05px;">Pantoprazol Basics 20mg</span><div style="left:834px;top:623px;width:1px;height:21px;background:#5a5a5a"></div><span class="t g" style="left:838px;top:626px;">Basic</span><div style="left:977px;top:623px;width:1px;height:21px;background:#5a5a5a"></div><span class="t g" style="left:981px;top:626px;">Tmr</span><div style="left:1126px;top:623px;width:1px;height:21px;background:#5a5a5a"></div><span class="t g" style="left:1130px;top:626px;letter-spacing:0.49px;">3275720</span><div style="left:1235px;top:623px;width:1px;height:21px;background:#5a5a5a"></div><span class="t g" style="left:1239px;top:626px;">350</span><div style="left:1341px;top:623px;width:1px;height:21px;background:#5a5a5a"></div><span class="t g" style="left:1342px;top:626px;width:101.4px;text-align:right;letter-spacing:.4px;">7</span><div style="left:1445px;top:623px;width:1px;height:21px;background:#5a5a5a"></div><span class="t g" style="left:1446px;top:626px;width:74.4px;text-align:right;letter-spacing:.4px;">123</span><div style="left:1522px;top:623px;width:1px;height:21px;background:#5a5a5a"></div>
<div style="left:483px;top:664px;width:15px;height:1px;background:#4e4e4e"></div><div style="left:497px;top:664px;width:1219px;height:1px;background:#5a5a5a"></div><div style="left:497px;top:644px;width:1px;height:21px;background:#5a5a5a"></div><span class="t g" style="left:501px;top:647px;letter-spacing:0.09px;">Risperidon 1a Pharma 0.5mg</span><div style="left:834px;top:644px;width:1px;height:21px;background:#5a5a5a"></div><span class="t g" style="left:838px;top:647px;">Aphar</span><div style="left:977px;top:644px;width:1px;height:21px;background:#5a5a5a"></div><span class="t g" style="left:981px;top:647px;">Fta</span><div style="left:1126px;top:644px;width:1px;height:21px;background:#5a5a5a"></div><span class="t g" style="left:1130px;top:647px;letter-spacing:0.49px;">5992526</span><div style="left:1235px;top:644px;width:1px;height:21px;background:#5a5a5a"></div><span class="t g" style="left:1239px;top:647px;">123</span><div style="left:1341px;top:644px;width:1px;height:21px;background:#5a5a5a"></div><span class="t g" style="left:1342px;top:647px;width:101.4px;text-align:right;letter-spacing:.4px;">7</span><div style="left:1445px;top:644px;width:1px;height:21px;background:#5a5a5a"></div><span class="t g" style="left:1446px;top:647px;width:74.4px;text-align:right;letter-spacing:.4px;">60</span><div style="left:1522px;top:644px;width:1px;height:21px;background:#5a5a5a"></div>
<div style="left:483px;top:685px;width:15px;height:1px;background:#4e4e4e"></div><div style="left:497px;top:685px;width:1219px;height:1px;background:#5a5a5a"></div><div style="left:497px;top:665px;width:1px;height:21px;background:#5a5a5a"></div><span class="t g" style="left:501px;top:668px;letter-spacing:-0.01px;">Tevacidol 0.5ug Weichkaps</span><div style="left:834px;top:665px;width:1px;height:21px;background:#5a5a5a"></div><span class="t g" style="left:838px;top:668px;">Tevag</span><div style="left:977px;top:665px;width:1px;height:21px;background:#5a5a5a"></div><span class="t g" style="left:981px;top:668px;">Kap</span><div style="left:1126px;top:665px;width:1px;height:21px;background:#5a5a5a"></div><span class="t g" style="left:1130px;top:668px;letter-spacing:0.49px;">6706557</span><div style="left:1235px;top:665px;width:1px;height:21px;background:#5a5a5a"></div><span class="t g" style="left:1239px;top:668px;">0</span><div style="left:1341px;top:665px;width:1px;height:21px;background:#5a5a5a"></div><span class="t g" style="left:1342px;top:668px;width:101.4px;text-align:right;letter-spacing:.4px;">7</span><div style="left:1445px;top:665px;width:1px;height:21px;background:#5a5a5a"></div><span class="t g" style="left:1446px;top:668px;width:74.4px;text-align:right;letter-spacing:.4px;">78</span><div style="left:1522px;top:665px;width:1px;height:21px;background:#5a5a5a"></div>
<div style="left:483px;top:706px;width:15px;height:1px;background:#4e4e4e"></div><div style="left:497px;top:706px;width:1219px;height:1px;background:#5a5a5a"></div><div style="left:497px;top:686px;width:1px;height:21px;background:#5a5a5a"></div><span class="t g" style="left:501px;top:689px;letter-spacing:-0.07px;">Thiamazol Aristo 5mg</span><div style="left:834px;top:686px;width:1px;height:21px;background:#5a5a5a"></div><span class="t g" style="left:838px;top:689px;">Arist</span><div style="left:977px;top:686px;width:1px;height:21px;background:#5a5a5a"></div><span class="t g" style="left:981px;top:689px;">Tab</span><div style="left:1126px;top:686px;width:1px;height:21px;background:#5a5a5a"></div><span class="t g" style="left:1130px;top:689px;letter-spacing:0.49px;">7100638</span><div style="left:1235px;top:686px;width:1px;height:21px;background:#5a5a5a"></div><span class="t g" style="left:1239px;top:689px;">0</span><div style="left:1341px;top:686px;width:1px;height:21px;background:#5a5a5a"></div><span class="t g" style="left:1342px;top:689px;width:101.4px;text-align:right;letter-spacing:.4px;">7</span><div style="left:1445px;top:686px;width:1px;height:21px;background:#5a5a5a"></div><span class="t g" style="left:1446px;top:689px;width:74.4px;text-align:right;letter-spacing:.4px;">91</span><div style="left:1522px;top:686px;width:1px;height:21px;background:#5a5a5a"></div>
<div style="left:483px;top:727px;width:15px;height:1px;background:#4e4e4e"></div><div style="left:497px;top:727px;width:1219px;height:1px;background:#5a5a5a"></div><div style="left:497px;top:707px;width:1px;height:21px;background:#5a5a5a"></div><span class="t g" style="left:501px;top:710px;letter-spacing:0.10px;">Valoron N Retard 50/4mg</span><div style="left:834px;top:707px;width:1px;height:21px;background:#5a5a5a"></div><span class="t g" style="left:838px;top:710px;">Pfize</span><div style="left:977px;top:707px;width:1px;height:21px;background:#5a5a5a"></div><span class="t g" style="left:981px;top:710px;">Ret</span><div style="left:1126px;top:707px;width:1px;height:21px;background:#5a5a5a"></div><span class="t g" style="left:1130px;top:710px;letter-spacing:0.49px;">425679</span><div style="left:1235px;top:707px;width:1px;height:21px;background:#5a5a5a"></div><span class="t g" style="left:1239px;top:710px;">0</span><div style="left:1341px;top:707px;width:1px;height:21px;background:#5a5a5a"></div><span class="t g" style="left:1342px;top:710px;width:101.4px;text-align:right;letter-spacing:.4px;">7</span><div style="left:1445px;top:707px;width:1px;height:21px;background:#5a5a5a"></div><span class="t g" style="left:1446px;top:710px;width:74.4px;text-align:right;letter-spacing:.4px;">0</span><div style="left:1522px;top:707px;width:1px;height:21px;background:#5a5a5a"></div><span class="t g" style="left:1526px;top:710px;letter-spacing:-0.27px;">lack of inventory</span>
<div style="left:1715px;top:539px;width:1px;height:189px;background:#5a5a5a"></div><!-- status bar -->
<div style="left:0px;top:1064px;width:1728px;height:27px;background:linear-gradient(#555,#4a4a4a);border-top:1px solid #5c5c5c"></div><svg style="left:10px;top:1070px" width="17" height="17" viewBox="0 0 17 17"><defs><linearGradient id="g45" x1="0" y1="0" x2="0" y2="1"><stop offset="0" stop-color="#30a8f0"/><stop offset="1" stop-color="#30a8f0"/></linearGradient></defs><circle cx="7" cy="4.3" r="3.3" fill="#ffc890" stroke="#c88030" stroke-width=".6"/><path d="M3.7 3.6 Q7 -0.8 10.3 3.6 Q7 2 3.7 3.6Z" fill="#e8b040"/><path d="M1 16 V11.5 Q1 8.2 5 8.2 H9 Q13 8.2 13 11.5 V16Z" fill="url(#g45)"/><path d="M4 11 V16" stroke="#000" stroke-opacity=".25" stroke-width=".8"/></svg><span class="t st" style="left:28.5px;top:1071px;letter-spacing:-0.60px;">Paul</span><svg style="left:61px;top:1070px" width="17" height="17" viewBox="0 0 17 17"><rect x="0.5" y="1.5" width="15" height="13" fill="#ffe890" stroke="#c09020" stroke-width=".8"/><circle cx="5.500" cy="6" r="2.2" fill="#ffc890"/><path d="M2 14 V11 Q2 9 5.500 9 Q9 9 9 11 V14Z" fill="#e04040"/><circle cx="11" cy="7" r="2.2" fill="#ffc890"/><path d="M7.500 15 V12 Q7.500 10 11 10 Q14.500 10 14.500 12 V15Z" fill="#3080e0"/></svg><span class="t st" style="left:81px;top:1070px;letter-spacing:-0.41px;">User</span><svg style="left:118px;top:1070px" width="15" height="16" viewBox="0 0 15 16"><rect x="7" y="1" width="6.500" height="12" fill="#e8e8f0" stroke="#9090a8" stroke-width=".6"/><rect x="0.5" y="4.5" width="10" height="7.500" fill="#2870e0" stroke="#d8d8e8" stroke-width="1"/><rect x="3" y="13" width="5" height="1.500" fill="#202020"/></svg><span class="t st" style="left:136px;top:1071px;letter-spacing:-0.19px;font-size:10px;">PENTWICKLUNG</span><svg style="left:228px;top:1071px" width="15" height="12" viewBox="0 0 15 12"><path d="M0 8.500 H14" stroke="#d8d8d8" stroke-width="1.2" stroke-dasharray="2.500 1"/><path d="M4 8 L7 2.500 L10 8Z" fill="#40a0f0"/><rect x="4" y="7.500" width="6" height="2.500" fill="#2070d0"/></svg><span class="t st" style="left:248.5px;top:1071px;letter-spacing:0.03px;">192.168.188.141</span><svg style="left:346px;top:1069px" width="13" height="18" viewBox="0 0 13 18"><defs><linearGradient id="g46" x1="0" y1="0" x2="1" y2="0"><stop offset="0" stop-color="#4890e0"/><stop offset="0.4" stop-color="#a0d0ff"/><stop offset="1" stop-color="#2868c0"/></linearGradient></defs><path d="M1 3 V14 A5.500 2.500 0 0 0 12 14 V3Z" fill="url(#g46)"/><ellipse cx="6.500" cy="3" rx="5.500" ry="2.500" fill="#b8e0ff" stroke="#3878d0" stroke-width=".5"/></svg><span class="t sy" style="left:364.5px;top:1071px;letter-spacing:-0.37px;font-size:10px;">BCM</span><svg style="left:399px;top:1070px" width="16" height="15" viewBox="0 0 16 15"><path d="M7.500 1 V13 M1.500 4 H13.500 M4.500 14 H10.500" stroke="#c84010" stroke-width="1.300"/><path d="M0 9 H5 L2.500 4.500Z M10 9 H15 L12.500 4.500Z" fill="#e8a040" stroke="#c05010" stroke-width=".5"/></svg><svg style="left:427px;top:1070px" width="16" height="16" viewBox="0 0 16 16"><rect x="8" y="0.500" width="6.500" height="6.500" fill="#f4f4f4" stroke="#a0a0a0" stroke-width=".5"/><rect x="0.500" y="8" width="6" height="6.500" fill="#f4f4f4" stroke="#a0a0a0" stroke-width=".5"/><rect x="8.500" y="8" width="6" height="6.500" fill="#f4f4f4" stroke="#a0a0a0" stroke-width=".5"/><path d="M3.500 8 V5 H8" stroke="#d8d8d8" fill="none" stroke-width="1"/><rect x="2" y="10" width="3" height="2" fill="#303030"/><rect x="10" y="10" width="3" height="2" fill="#303030"/><rect x="10" y="2.500" width="3" height="2" fill="#303030"/></svg><div style="left:456px;top:1072px;width:12px;height:12px;border-radius:50%;background:radial-gradient(circle 9.4px at 36% 32%,#b8b8ff 0%,#1010f0 24%,#1010f0 46%,#000050 100%)"></div><span class="t st" style="left:474px;top:1071px;letter-spacing:0.17px;">Startup</span><div style="left:525px;top:1072px;width:12px;height:12px;border-radius:50%;background:radial-gradient(circle 9.4px at 36% 32%,#b8b8ff 0%,#1010f0 24%,#1010f0 46%,#000050 100%)"></div><span class="t st" style="left:543px;top:1071px;letter-spacing:0.26px;">Import</span><div style="left:590px;top:1072px;width:12px;height:12px;border-radius:50%;background:radial-gradient(circle 9.4px at 36% 32%,#b8b8ff 0%,#1010f0 24%,#1010f0 46%,#000050 100%)"></div><span class="t st" style="left:608px;top:1070px;letter-spacing:0.24px;">Export</span><div style="left:655px;top:1072px;width:12px;height:12px;border-radius:50%;background:radial-gradient(circle 9.4px at 36% 32%,#b8b8ff 0%,#1010f0 24%,#1010f0 46%,#000050 100%)"></div><span class="t st" style="left:673px;top:1071px;letter-spacing:-0.06px;">Copy</span><div style="left:712px;top:1072px;width:12px;height:12px;border-radius:50%;background:radial-gradient(circle 9.4px at 36% 32%,#b8b8ff 0%,#1010f0 24%,#1010f0 46%,#000050 100%)"></div><span class="t st" style="left:731px;top:1071px;letter-spacing:-0.16px;">Document</span><div style="left:794px;top:1072px;width:12px;height:12px;border-radius:50%;background:radial-gradient(circle 9.4px at 36% 32%,#b8b8ff 0%,#1010f0 24%,#1010f0 46%,#000050 100%)"></div><span class="t st" style="left:812px;top:1071px;letter-spacing:-0.43px;">Pickers</span><div style="left:859.5px;top:1072px;width:12px;height:12px;border-radius:50%;background:radial-gradient(circle 9.4px at 36% 32%,#ffc8d0 0%,#e80828 24%,#e80828 46%,#500008 100%)"></div><span class="t st" style="left:878px;top:1071px;letter-spacing:-0.51px;">Scale</span><span class="t st" style="left:927px;top:1071px;letter-spacing:-0.49px;">0 mg</span>
</div>
</body></html>
